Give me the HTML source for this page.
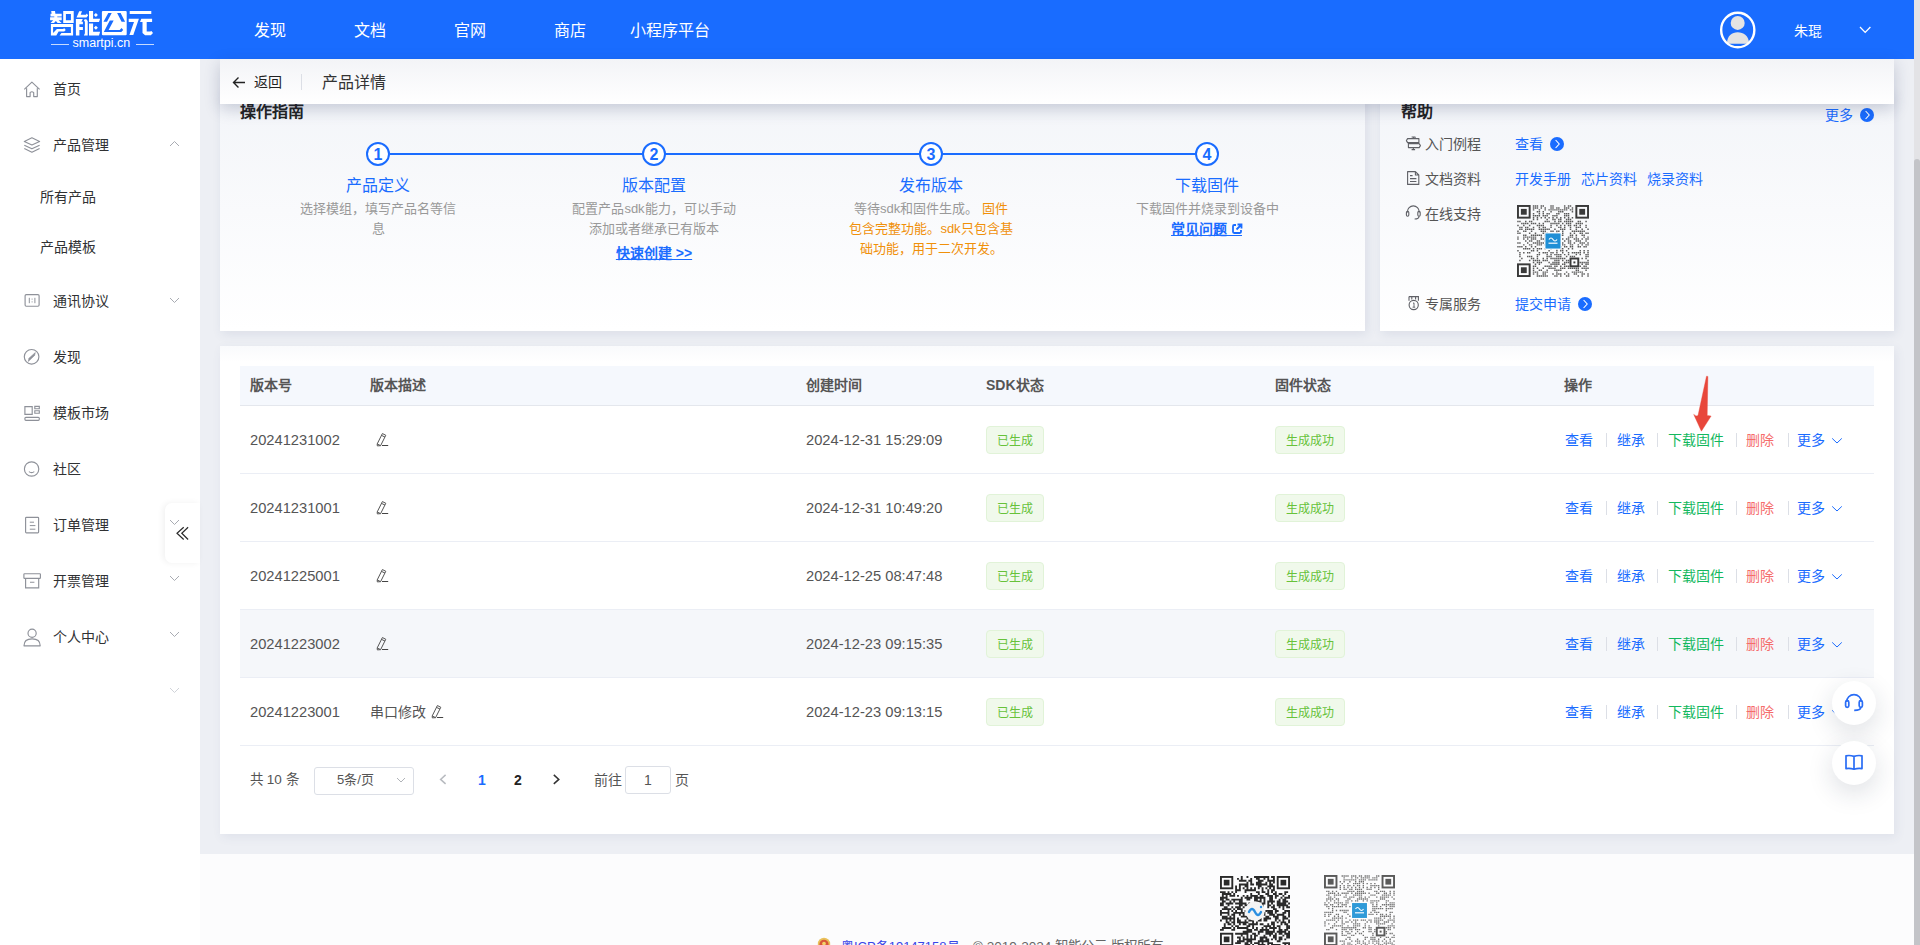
<!DOCTYPE html><html lang="zh-CN"><head><meta charset="utf-8"><style>
*{box-sizing:border-box}
html,body{margin:0;padding:0}
body{width:1920px;height:945px;overflow:hidden;position:relative;background:#edeff4;font-family:"Liberation Sans",sans-serif;color:#333}
.abs{position:absolute;display:block}
.t{position:absolute;white-space:nowrap}
#hdr{position:absolute;left:0;top:0;width:1914px;height:59px;background:#196cff}
.nav{position:absolute;top:1px;height:59px;line-height:59px;width:100px;text-align:center;color:#fff;font-size:16px}
#side{position:absolute;left:0;top:59px;width:200px;height:886px;background:#fff}
.mi{position:absolute;left:53px;font-size:14px;line-height:20px;color:#303133}
.si{position:absolute;left:40px;font-size:14px;line-height:20px;color:#303133}
.card{position:absolute;background:linear-gradient(180deg,#f3f5f9 0%,#ffffff 100%);box-shadow:2px 3px 10px rgba(60,80,130,.1)}
.bar{position:absolute;left:220px;top:59px;width:1674px;height:45px;background:linear-gradient(180deg,#f3f4f7,#ffffff);box-shadow:0 5px 16px rgba(30,45,90,.22);z-index:5}
.step{position:absolute;width:276px;text-align:center}
.stt{font-size:16px;line-height:22px;color:#1a6cff}
.std{font-size:13px;line-height:20px;color:#999}
.circ{position:absolute;width:24px;height:24px;border:2px solid #1a6cff;border-radius:50%;background:#fff;color:#1a6cff;font-weight:bold;font-size:16px;line-height:21px;text-align:center}
.org{color:#f0900a}
.lnk{color:#1a6cff;font-weight:bold;text-decoration:underline;font-size:14px}
.hl{position:absolute;font-size:14px;line-height:20px;color:#555}
.hv{position:absolute;font-size:14px;line-height:20px;color:#1a6cff}
.arr{display:inline-block;width:13px;height:13px;border-radius:50%;background:#1a6cff;vertical-align:-1px}
.th{position:absolute;top:366px;font-size:14px;font-weight:bold;color:#555;line-height:39px}
.td{position:absolute;font-size:14px;color:#555;line-height:20px}
.dg{font-size:14.7px}
.tag{position:absolute;height:28px;border:1px solid #e1f3d8;background:#f0f9eb;color:#67c23a;border-radius:4px;font-size:12px;line-height:28px;text-align:center}
.op{position:absolute;font-size:14px;line-height:20px}
.dv{position:absolute;width:1px;height:14px;background:#dcdfe6}
</style></head><body><div id="hdr"><svg class="abs" style="left:0;top:0" width="160" height="59" viewBox="0 0 160 59"><g fill="#fff">
<path fill-rule="evenodd" d="M63.2 11 H73.7 V22.9 H63.2 Z M65.9 13.9 V20.2 H70.9 V13.9 Z"/>
<path d="M51.2 10.9 H55 L55.4 13.7 H61.7 V16.4 H57.3 V17.2 H61.7 V20.2 H58.6 L61.7 22.9 H57.6 L55.9 21 L54 22.9 H50.5 L53.2 20.2 H50.1 V17.2 H54.3 V16.4 H50.5 V13.7 H51.6 Z"/>
<path fill-rule="evenodd" d="M50.9 24 H73.1 V35.6 H59.6 L61.4 33.1 H70.9 V27 H53.1 V33.1 L56.9 29 H63.4 L64 28 L65.8 29.9 L64.2 31.5 H58.6 L56.3 35.6 H50.9 Z"/>
<path d="M79.2 11.2 H82 L80.7 14.8 H85.9 L86.9 13.6 L88.1 15.6 L86.5 17.5 H76.5 Z"/>
<path d="M75.9 19.1 H82.8 L81.4 21.7 H79.4 V35.6 H75.9 Z M79.4 21.7 H82.9 V24.2 H79.4 Z M79.4 27 H82.9 V29.9 H79.4 Z M84.6 19.2 H86.3 L87.7 21 V35.6 H83.9 L84.9 33.3 V21.6 L83.9 20.9 Z"/>
<path d="M89 10.9 H93.1 V18.8 H100.1 L99 22 H89 Z M89 23.6 H93.1 V31.8 H100.1 L99 35.6 H89 Z"/>
<path d="M95.9 13 L97.9 15 L95.9 17 L93.9 15 Z M95.9 25.8 L97.9 27.8 L95.9 29.8 L93.9 27.8 Z"/>
<path fill-rule="evenodd" d="M103 10.9 H125.6 Q126.7 10.9 126.7 12 V34.2 Q126.7 35.3 125.6 35.3 H103 Q101.9 35.3 101.9 34.2 V12 Q101.9 10.9 103 10.9 Z M108.3 13.1 L111.7 13.1 L107 21.65 L103.5 21.65 Z M117.1 13.1 L120.6 13.1 L125.1 21.65 L121.6 21.65 Z M109.8 20.4 L113.65 20.4 L108.6 29.9 L119.7 29.9 L121.6 28 L123.2 29.9 L121.3 32.1 L103.8 32.1 Z"/>
<path d="M129.7 11 H151.3 V13.9 H129.7 Z M128.7 18.8 H138.9 L133.3 35 H129.4 L134 22 H128.7 Z M141.3 18.8 H152.1 V22 H146.7 V31.5 H150.2 L151.4 30.9 L153 33.1 L150.8 35.3 H145.1 L142.5 33.1 V22 H140 Z"/>
</g></svg><div class="t" style="left:72.6px;top:35px;font-size:12.5px;color:#fff;line-height:16px">smartpi.cn</div><div class="abs" style="left:51px;top:44px;width:18px;height:1px;background:rgba(255,255,255,.75)"></div><div class="abs" style="left:136px;top:44px;width:18px;height:1px;background:rgba(255,255,255,.75)"></div><div class="nav" style="left:220px">发现</div><div class="nav" style="left:320px">文档</div><div class="nav" style="left:420px">官网</div><div class="nav" style="left:520px">商店</div><div class="nav" style="left:620px">小程序平台</div><svg class="abs" style="left:1719px;top:11px" width="38" height="38" viewBox="0 0 38 38"><circle cx="18.7" cy="11.9" r="7" fill="#e3e3e3"/><path d="M8 32.8 C8 24.5 13 21.3 18.7 21.3 C24.4 21.3 30 24.5 30 32.8 Z" fill="#e3e3e3"/><ellipse cx="18.75" cy="19" rx="16.6" ry="17.3" fill="none" stroke="#fff" stroke-width="2.4"/></svg><div class="t" style="left:1794px;top:20.5px;font-size:14px;line-height:20px;color:#fff">朱琨</div><svg class="abs" style="left:1858px;top:24px" width="14" height="10" viewBox="0 0 14 10"><path d="M2 3 L7.2 8.4 L12.4 3" fill="none" stroke="#fff" stroke-width="1.3"/></svg></div><svg class="abs" style="left:0;top:0;z-index:2" width="200" height="700" viewBox="0 0 200 700">
<path d="M24.3 89.4 L31.9 82.2 L39.6 89.4 M26.6 88.2 V96.6 H30.1 V92.6 Q31.9 90.9 33.7 92.6 V96.6 H37.3 V88.2" fill="none" stroke="#8e9199" stroke-width="1.15" stroke-linejoin="round"/>
<path d="M24.3 141.4 L31.9 137.8 L39.6 141.4 L31.9 145 Z M24.3 145.2 L31.9 148.8 L39.6 145.2 M24.3 148.6 L31.9 152.2 L39.6 148.6" fill="none" stroke="#8e9199" stroke-width="1.15" stroke-linejoin="round"/>
<rect x="25.1" y="294.6" width="14" height="11.6" rx="1.2" fill="none" stroke="#8e9199" stroke-width="1.15"/>
<path d="M29.3 297.8 V303.2 M34.9 297.8 V303.2 M32.1 298.6 V299.6 M32.1 301.4 V302.4" stroke="#8e9199" stroke-width="1"/>
<circle cx="31.6" cy="356.8" r="7.3" fill="none" stroke="#8e9199" stroke-width="1.15"/>
<path d="M35.3 352.6 L34.6 355.4 L28.3 361.4 L29 358.2 Z" fill="#8e9199" stroke="#8e9199" stroke-width="0.6" stroke-linejoin="round"/>
<path d="M24.9 406.6 H32.2 V414.4 H24.9 Z M34.8 406.4 H39.3 V408.7 H34.8 Z M34.8 410.7 H39.3 V413.2 H34.8 Z" fill="none" stroke="#8e9199" stroke-width="1.15"/>
<rect x="24.9" y="417.3" width="14.4" height="3" rx="1" fill="none" stroke="#8e9199" stroke-width="1.15"/>
<circle cx="31.6" cy="469" r="7.2" fill="none" stroke="#8e9199" stroke-width="1.15"/>
<path d="M28.9 471.6 Q31.6 473.6 34.3 471.6" fill="none" stroke="#8e9199" stroke-width="1.15"/>
<rect x="25.6" y="517.3" width="13" height="15.5" rx="0.8" fill="none" stroke="#8e9199" stroke-width="1.15"/>
<path d="M29.8 522.2 H34 M29.8 525.6 H35.4 M29.8 529.2 H35.4" stroke="#8e9199" stroke-width="1"/>
<rect x="23.9" y="573.7" width="16.5" height="4.6" rx="0.6" fill="none" stroke="#8e9199" stroke-width="1.15"/>
<path d="M25.6 578.3 V587.8 H38.7 V578.3 M30 582.2 H34.4" fill="none" stroke="#8e9199" stroke-width="1.15"/>
<circle cx="32.1" cy="633.2" r="4.1" fill="none" stroke="#8e9199" stroke-width="1.15"/>
<path d="M24 645.8 C24 640.5 28 638.9 32.1 638.9 C36.2 638.9 40.2 640.5 40.2 645.8 Z" fill="none" stroke="#8e9199" stroke-width="1.15" stroke-linejoin="round"/>
</svg><div id="side"></div><div class="mi" style="top:79px">首页</div><div class="mi" style="top:135px">产品管理</div><svg class="abs" style="left:169px;top:140px" width="11" height="7" viewBox="0 0 11 7"><path d="M1 6 L5.5 1.5 L10 6" fill="none" stroke="#a8abb2" stroke-width="1"/></svg><div class="si" style="top:187px">所有产品</div><div class="si" style="top:237px">产品模板</div><div class="mi" style="top:291px">通讯协议</div><svg class="abs" style="left:169px;top:297px;z-index:4" width="11" height="7" viewBox="0 0 11 7"><path d="M1 1 L5.5 5.5 L10 1" fill="none" stroke="#a8abb2" stroke-width="1"/></svg><div class="mi" style="top:347px">发现</div><div class="mi" style="top:403px">模板市场</div><div class="mi" style="top:459px">社区</div><div class="mi" style="top:515px">订单管理</div><svg class="abs" style="left:169px;top:519px;z-index:4" width="11" height="7" viewBox="0 0 11 7"><path d="M1 1 L5.5 5.5 L10 1" fill="none" stroke="#a8abb2" stroke-width="1"/></svg><div class="mi" style="top:571px">开票管理</div><svg class="abs" style="left:169px;top:575px;z-index:4" width="11" height="7" viewBox="0 0 11 7"><path d="M1 1 L5.5 5.5 L10 1" fill="none" stroke="#a8abb2" stroke-width="1"/></svg><div class="mi" style="top:627px">个人中心</div><svg class="abs" style="left:169px;top:631px;z-index:4" width="11" height="7" viewBox="0 0 11 7"><path d="M1 1 L5.5 5.5 L10 1" fill="none" stroke="#a8abb2" stroke-width="1"/></svg><svg class="abs" style="left:169px;top:687px" width="11" height="7" viewBox="0 0 11 7"><path d="M1 1 L5.5 5.5 L10 1" fill="none" stroke="#d0d3d9" stroke-width="1"/></svg><div class="abs" style="left:165px;top:503px;width:35px;height:60px;background:#fff;border-radius:7px 0 0 7px;box-shadow:-2px 0 6px rgba(0,0,0,.06);z-index:3"></div><svg class="abs" style="left:176px;top:526px;z-index:4" width="14" height="15" viewBox="0 0 14 15"><path d="M7.7 1.3 L1 7.2 L7.7 13.5 M12.1 1.3 L5.8 7.2 L12.1 13.5" fill="none" stroke="#2a2a2a" stroke-width="1.2"/></svg><div class="bar"><svg class="abs" style="left:12px;top:17px" width="14" height="13" viewBox="0 0 14 13"><path d="M13 6.5 H1.5 M6.5 1.5 L1.5 6.5 L6.5 11.5" fill="none" stroke="#222" stroke-width="1.4"/></svg><div class="t" style="left:34px;top:13px;font-size:14px;line-height:20px;color:#222">返回</div><div class="abs" style="left:81px;top:15px;width:1px;height:16px;background:#dcdfe6"></div><div class="t" style="left:102px;top:13px;font-size:16px;line-height:22px;color:#333">产品详情</div></div><div class="card" style="left:220px;top:91px;width:1145px;height:240px"></div><div class="t" style="left:240px;top:101px;font-size:16px;line-height:22px;font-weight:bold;color:#222">操作指南</div><div class="abs" style="left:390px;top:153px;width:806px;height:2px;background:#1a6cff"></div><div class="circ" style="left:366px;top:142px">1</div><div class="step" style="left:240px;top:175px"><div class="stt">产品定义</div><div class="std" style="margin-top:2px">选择模组，填写产品名等信<br>息</div></div><div class="circ" style="left:642px;top:142px">2</div><div class="step" style="left:516px;top:175px"><div class="stt">版本配置</div><div class="std" style="margin-top:2px">配置产品sdk能力，可以手动<br>添加或者继承已有版本</div><div style="margin-top:4px;line-height:20px"><span class="lnk">快速创建 &gt;&gt;</span></div></div><div class="circ" style="left:919px;top:142px">3</div><div class="step" style="left:793px;top:175px"><div class="stt">发布版本</div><div class="std" style="margin-top:2px">等待sdk和固件生成。 <span class="org">固件<br>包含完整功能。sdk只包含基<br>础功能，用于二次开发。</span></div></div><div class="circ" style="left:1195px;top:142px">4</div><div class="step" style="left:1069px;top:175px"><div class="stt">下载固件</div><div class="std" style="margin-top:2px">下载固件并烧录到设备中</div><div style="margin-top:0px;line-height:20px"><span class="lnk">常见问题 <svg width="12" height="12" viewBox="0 0 12 12" style="vertical-align:-1px"><path d="M5 2H3.2Q2 2 2 3.2v5.6Q2 10 3.2 10h5.6Q10 10 10 8.8V7" fill="none" stroke="#1a6cff" stroke-width="1.8"/><path d="M6.5 1.5h4v4M10.5 1.5 L5.5 6.5" fill="none" stroke="#1a6cff" stroke-width="1.8"/></svg></span></div></div><div class="abs" style="left:1226px;top:235px;width:16px;height:1px;background:#1a6cff"></div><div class="card" style="left:1380px;top:91px;width:514px;height:240px"></div><div class="t" style="left:1401px;top:101px;font-size:16px;line-height:22px;font-weight:bold;color:#222">帮助</div><div class="hv" style="left:1825px;top:105px">更多 <svg width="14" height="14" viewBox="0 0 14 14" style="vertical-align:-2px;margin-left:3px"><circle cx="7" cy="7" r="7" fill="#1a6cff"/><path d="M5.6 3 L9.2 7 L5.6 11" fill="none" stroke="#fff" stroke-width="1.1"/></svg></div><svg class="abs" style="left:0;top:0;z-index:2" width="1920" height="340" viewBox="0 0 1920 340">
<path d="M1411.6 137 H1415.1 V138.6 M1413.35 137 V138.6 M1407.6 138.6 H1418.9 V142.6 H1407.6 L1406.4 140.6 Z M1408.4 143.6 H1419.2 L1420.4 145.6 L1419.2 147.6 H1408.4 Z M1413.35 147.6 V149.6 M1411.6 149.6 H1415.1" fill="none" stroke="#5f6066" stroke-width="1.1" stroke-linejoin="round"/>
<path d="M1407.6 171.6 H1415.4 L1418.8 175 V184.4 H1407.6 Z M1415.4 171.6 V175 H1418.8" fill="none" stroke="#5f6066" stroke-width="1.1" stroke-linejoin="round"/>
<path d="M1410 175.6 H1412.6 M1410 178.6 H1416.4 M1410 181.5 H1416.4" stroke="#5f6066" stroke-width="1.1"/>
<path d="M1407.4 212.6 V211.8 A5.9 5.9 0 0 1 1419.2 211.8 V212.6" fill="none" stroke="#5f6066" stroke-width="1.1"/>
<rect x="1406.4" y="211.4" width="2.4" height="4.8" rx="1.2" fill="none" stroke="#5f6066" stroke-width="1.1"/>
<rect x="1417.8" y="211.4" width="2.4" height="4.8" rx="1.2" fill="none" stroke="#5f6066" stroke-width="1.1"/>
<path d="M1419 216.2 Q1419 219 1414.6 219" fill="none" stroke="#5f6066" stroke-width="1.1"/>
<path d="M1409 296.6 H1418.4 V300.8 M1409 296.6 V300.8 M1411.8 296.6 V299.6 M1415.6 296.6 V299.6" fill="none" stroke="#5f6066" stroke-width="1.1"/>
<circle cx="1413.7" cy="305" r="4.6" fill="none" stroke="#5f6066" stroke-width="1.1"/>
<path d="M1413 303.4 L1414 302.8 V307.2 M1412.6 307.2 H1415.2" fill="none" stroke="#5f6066" stroke-width="0.9"/>
</svg><div class="hl" style="left:1425px;top:134px">入门例程</div><div class="hl" style="left:1425px;top:169px">文档资料</div><div class="hl" style="left:1425px;top:204px">在线支持</div><div class="hl" style="left:1425px;top:294px">专属服务</div><div class="hv" style="left:1515px;top:134px">查看 <svg width="14" height="14" viewBox="0 0 14 14" style="vertical-align:-2px;margin-left:3px"><circle cx="7" cy="7" r="7" fill="#1a6cff"/><path d="M5.6 3 L9.2 7 L5.6 11" fill="none" stroke="#fff" stroke-width="1.1"/></svg></div><div class="hv" style="left:1515px;top:169px">开发手册</div><div class="hv" style="left:1581px;top:169px">芯片资料</div><div class="hv" style="left:1647px;top:169px">烧录资料</div><svg class="abs" style="left:1517px;top:205px" width="72" height="72" viewBox="0 0 72 72"><rect x="0.97" y="0.97" width="11.68" height="11.68" fill="none" stroke="#3a3a3a" stroke-width="1.95"/><rect x="3.89" y="3.89" width="5.84" height="5.84" fill="#3a3a3a"/><rect x="59.35" y="0.97" width="11.68" height="11.68" fill="none" stroke="#3a3a3a" stroke-width="1.95"/><rect x="62.27" y="3.89" width="5.84" height="5.84" fill="#3a3a3a"/><rect x="0.97" y="59.35" width="11.68" height="11.68" fill="none" stroke="#3a3a3a" stroke-width="1.95"/><rect x="3.89" y="62.27" width="5.84" height="5.84" fill="#3a3a3a"/><rect x="53.51" y="53.51" width="7.78" height="7.78" fill="none" stroke="#3a3a3a" stroke-width="1.95"/><rect x="56.43" y="56.43" width="1.95" height="1.95" fill="#3a3a3a"/><path d="M0.24 15.81h1.46v1.46h-1.46zM0.24 19.70h1.46v1.46h-1.46zM0.24 25.54h1.46v1.46h-1.46zM0.24 27.49h1.46v1.46h-1.46zM0.24 31.38h1.46v1.46h-1.46zM0.24 33.32h1.46v1.46h-1.46zM0.24 37.22h1.46v1.46h-1.46zM0.24 41.11h1.46v1.46h-1.46zM0.24 45.00h1.46v1.46h-1.46zM2.19 15.81h1.46v1.46h-1.46zM2.19 21.65h1.46v1.46h-1.46zM2.19 23.59h1.46v1.46h-1.46zM2.19 27.49h1.46v1.46h-1.46zM2.19 37.22h1.46v1.46h-1.46zM2.19 41.11h1.46v1.46h-1.46zM2.19 46.95h1.46v1.46h-1.46zM2.19 48.89h1.46v1.46h-1.46zM2.19 50.84h1.46v1.46h-1.46zM2.19 54.73h1.46v1.46h-1.46zM4.14 17.76h1.46v1.46h-1.46zM4.14 21.65h1.46v1.46h-1.46zM4.14 23.59h1.46v1.46h-1.46zM4.14 41.11h1.46v1.46h-1.46zM4.14 52.78h1.46v1.46h-1.46zM6.08 17.76h1.46v1.46h-1.46zM6.08 19.70h1.46v1.46h-1.46zM6.08 25.54h1.46v1.46h-1.46zM6.08 29.43h1.46v1.46h-1.46zM6.08 31.38h1.46v1.46h-1.46zM6.08 33.32h1.46v1.46h-1.46zM6.08 39.16h1.46v1.46h-1.46zM6.08 43.05h1.46v1.46h-1.46zM6.08 46.95h1.46v1.46h-1.46zM8.03 15.81h1.46v1.46h-1.46zM8.03 17.76h1.46v1.46h-1.46zM8.03 21.65h1.46v1.46h-1.46zM8.03 23.59h1.46v1.46h-1.46zM8.03 25.54h1.46v1.46h-1.46zM8.03 29.43h1.46v1.46h-1.46zM8.03 31.38h1.46v1.46h-1.46zM8.03 35.27h1.46v1.46h-1.46zM8.03 41.11h1.46v1.46h-1.46zM8.03 43.05h1.46v1.46h-1.46zM9.97 17.76h1.46v1.46h-1.46zM9.97 21.65h1.46v1.46h-1.46zM9.97 23.59h1.46v1.46h-1.46zM9.97 31.38h1.46v1.46h-1.46zM9.97 33.32h1.46v1.46h-1.46zM9.97 37.22h1.46v1.46h-1.46zM9.97 43.05h1.46v1.46h-1.46zM9.97 46.95h1.46v1.46h-1.46zM9.97 50.84h1.46v1.46h-1.46zM11.92 15.81h1.46v1.46h-1.46zM11.92 19.70h1.46v1.46h-1.46zM11.92 23.59h1.46v1.46h-1.46zM11.92 27.49h1.46v1.46h-1.46zM11.92 31.38h1.46v1.46h-1.46zM11.92 35.27h1.46v1.46h-1.46zM11.92 39.16h1.46v1.46h-1.46zM11.92 43.05h1.46v1.46h-1.46zM11.92 46.95h1.46v1.46h-1.46zM11.92 50.84h1.46v1.46h-1.46zM11.92 54.73h1.46v1.46h-1.46zM13.86 15.81h1.46v1.46h-1.46zM13.86 17.76h1.46v1.46h-1.46zM13.86 23.59h1.46v1.46h-1.46zM13.86 25.54h1.46v1.46h-1.46zM13.86 29.43h1.46v1.46h-1.46zM13.86 31.38h1.46v1.46h-1.46zM13.86 33.32h1.46v1.46h-1.46zM13.86 35.27h1.46v1.46h-1.46zM13.86 39.16h1.46v1.46h-1.46zM13.86 41.11h1.46v1.46h-1.46zM13.86 45.00h1.46v1.46h-1.46zM13.86 50.84h1.46v1.46h-1.46zM13.86 52.78h1.46v1.46h-1.46zM15.81 0.24h1.46v1.46h-1.46zM15.81 2.19h1.46v1.46h-1.46zM15.81 4.14h1.46v1.46h-1.46zM15.81 8.03h1.46v1.46h-1.46zM15.81 9.97h1.46v1.46h-1.46zM15.81 11.92h1.46v1.46h-1.46zM15.81 13.86h1.46v1.46h-1.46zM15.81 17.76h1.46v1.46h-1.46zM15.81 21.65h1.46v1.46h-1.46zM15.81 23.59h1.46v1.46h-1.46zM15.81 29.43h1.46v1.46h-1.46zM15.81 31.38h1.46v1.46h-1.46zM15.81 33.32h1.46v1.46h-1.46zM15.81 37.22h1.46v1.46h-1.46zM15.81 43.05h1.46v1.46h-1.46zM15.81 45.00h1.46v1.46h-1.46zM15.81 52.78h1.46v1.46h-1.46zM15.81 54.73h1.46v1.46h-1.46zM15.81 56.68h1.46v1.46h-1.46zM15.81 60.57h1.46v1.46h-1.46zM15.81 62.51h1.46v1.46h-1.46zM15.81 64.46h1.46v1.46h-1.46zM15.81 66.41h1.46v1.46h-1.46zM15.81 68.35h1.46v1.46h-1.46zM17.76 0.24h1.46v1.46h-1.46zM17.76 2.19h1.46v1.46h-1.46zM17.76 9.97h1.46v1.46h-1.46zM17.76 17.76h1.46v1.46h-1.46zM17.76 27.49h1.46v1.46h-1.46zM17.76 29.43h1.46v1.46h-1.46zM17.76 31.38h1.46v1.46h-1.46zM17.76 33.32h1.46v1.46h-1.46zM17.76 37.22h1.46v1.46h-1.46zM17.76 41.11h1.46v1.46h-1.46zM17.76 54.73h1.46v1.46h-1.46zM17.76 58.62h1.46v1.46h-1.46zM17.76 60.57h1.46v1.46h-1.46zM17.76 66.41h1.46v1.46h-1.46zM19.70 0.24h1.46v1.46h-1.46zM19.70 2.19h1.46v1.46h-1.46zM19.70 6.08h1.46v1.46h-1.46zM19.70 9.97h1.46v1.46h-1.46zM19.70 11.92h1.46v1.46h-1.46zM19.70 13.86h1.46v1.46h-1.46zM19.70 19.70h1.46v1.46h-1.46zM19.70 29.43h1.46v1.46h-1.46zM19.70 35.27h1.46v1.46h-1.46zM19.70 37.22h1.46v1.46h-1.46zM19.70 39.16h1.46v1.46h-1.46zM19.70 43.05h1.46v1.46h-1.46zM19.70 45.00h1.46v1.46h-1.46zM19.70 48.89h1.46v1.46h-1.46zM19.70 50.84h1.46v1.46h-1.46zM19.70 52.78h1.46v1.46h-1.46zM19.70 54.73h1.46v1.46h-1.46zM19.70 56.68h1.46v1.46h-1.46zM19.70 62.51h1.46v1.46h-1.46zM19.70 66.41h1.46v1.46h-1.46zM19.70 68.35h1.46v1.46h-1.46zM19.70 70.30h1.46v1.46h-1.46zM21.65 4.14h1.46v1.46h-1.46zM21.65 6.08h1.46v1.46h-1.46zM21.65 8.03h1.46v1.46h-1.46zM21.65 9.97h1.46v1.46h-1.46zM21.65 17.76h1.46v1.46h-1.46zM21.65 19.70h1.46v1.46h-1.46zM21.65 21.65h1.46v1.46h-1.46zM21.65 23.59h1.46v1.46h-1.46zM21.65 29.43h1.46v1.46h-1.46zM21.65 35.27h1.46v1.46h-1.46zM21.65 37.22h1.46v1.46h-1.46zM21.65 39.16h1.46v1.46h-1.46zM21.65 43.05h1.46v1.46h-1.46zM21.65 46.95h1.46v1.46h-1.46zM21.65 48.89h1.46v1.46h-1.46zM21.65 54.73h1.46v1.46h-1.46zM21.65 56.68h1.46v1.46h-1.46zM21.65 58.62h1.46v1.46h-1.46zM21.65 64.46h1.46v1.46h-1.46zM21.65 70.30h1.46v1.46h-1.46zM23.59 0.24h1.46v1.46h-1.46zM23.59 2.19h1.46v1.46h-1.46zM23.59 11.92h1.46v1.46h-1.46zM23.59 19.70h1.46v1.46h-1.46zM23.59 23.59h1.46v1.46h-1.46zM23.59 25.54h1.46v1.46h-1.46zM23.59 29.43h1.46v1.46h-1.46zM23.59 31.38h1.46v1.46h-1.46zM23.59 33.32h1.46v1.46h-1.46zM23.59 37.22h1.46v1.46h-1.46zM23.59 39.16h1.46v1.46h-1.46zM23.59 43.05h1.46v1.46h-1.46zM23.59 56.68h1.46v1.46h-1.46zM23.59 64.46h1.46v1.46h-1.46zM23.59 70.30h1.46v1.46h-1.46zM25.54 0.24h1.46v1.46h-1.46zM25.54 6.08h1.46v1.46h-1.46zM25.54 8.03h1.46v1.46h-1.46zM25.54 9.97h1.46v1.46h-1.46zM25.54 17.76h1.46v1.46h-1.46zM25.54 19.70h1.46v1.46h-1.46zM25.54 21.65h1.46v1.46h-1.46zM25.54 23.59h1.46v1.46h-1.46zM25.54 25.54h1.46v1.46h-1.46zM25.54 27.49h1.46v1.46h-1.46zM25.54 33.32h1.46v1.46h-1.46zM25.54 37.22h1.46v1.46h-1.46zM25.54 46.95h1.46v1.46h-1.46zM25.54 52.78h1.46v1.46h-1.46zM25.54 54.73h1.46v1.46h-1.46zM25.54 62.51h1.46v1.46h-1.46zM25.54 66.41h1.46v1.46h-1.46zM25.54 68.35h1.46v1.46h-1.46zM25.54 70.30h1.46v1.46h-1.46zM27.49 2.19h1.46v1.46h-1.46zM27.49 4.14h1.46v1.46h-1.46zM27.49 9.97h1.46v1.46h-1.46zM27.49 11.92h1.46v1.46h-1.46zM27.49 15.81h1.46v1.46h-1.46zM27.49 21.65h1.46v1.46h-1.46zM27.49 23.59h1.46v1.46h-1.46zM27.49 25.54h1.46v1.46h-1.46zM27.49 27.49h1.46v1.46h-1.46zM27.49 29.43h1.46v1.46h-1.46zM27.49 31.38h1.46v1.46h-1.46zM27.49 33.32h1.46v1.46h-1.46zM27.49 35.27h1.46v1.46h-1.46zM27.49 39.16h1.46v1.46h-1.46zM27.49 43.05h1.46v1.46h-1.46zM27.49 46.95h1.46v1.46h-1.46zM27.49 54.73h1.46v1.46h-1.46zM27.49 60.57h1.46v1.46h-1.46zM27.49 66.41h1.46v1.46h-1.46zM27.49 68.35h1.46v1.46h-1.46zM27.49 70.30h1.46v1.46h-1.46zM29.43 8.03h1.46v1.46h-1.46zM29.43 9.97h1.46v1.46h-1.46zM29.43 13.86h1.46v1.46h-1.46zM29.43 15.81h1.46v1.46h-1.46zM29.43 23.59h1.46v1.46h-1.46zM29.43 27.49h1.46v1.46h-1.46zM29.43 29.43h1.46v1.46h-1.46zM29.43 33.32h1.46v1.46h-1.46zM29.43 35.27h1.46v1.46h-1.46zM29.43 39.16h1.46v1.46h-1.46zM29.43 41.11h1.46v1.46h-1.46zM29.43 46.95h1.46v1.46h-1.46zM29.43 48.89h1.46v1.46h-1.46zM29.43 50.84h1.46v1.46h-1.46zM29.43 52.78h1.46v1.46h-1.46zM29.43 54.73h1.46v1.46h-1.46zM29.43 60.57h1.46v1.46h-1.46zM29.43 64.46h1.46v1.46h-1.46zM29.43 66.41h1.46v1.46h-1.46zM29.43 70.30h1.46v1.46h-1.46zM31.38 4.14h1.46v1.46h-1.46zM31.38 8.03h1.46v1.46h-1.46zM31.38 11.92h1.46v1.46h-1.46zM31.38 15.81h1.46v1.46h-1.46zM31.38 23.59h1.46v1.46h-1.46zM31.38 33.32h1.46v1.46h-1.46zM31.38 35.27h1.46v1.46h-1.46zM31.38 37.22h1.46v1.46h-1.46zM31.38 45.00h1.46v1.46h-1.46zM31.38 50.84h1.46v1.46h-1.46zM31.38 56.68h1.46v1.46h-1.46zM31.38 60.57h1.46v1.46h-1.46zM31.38 62.51h1.46v1.46h-1.46zM33.32 0.24h1.46v1.46h-1.46zM33.32 2.19h1.46v1.46h-1.46zM33.32 4.14h1.46v1.46h-1.46zM33.32 6.08h1.46v1.46h-1.46zM33.32 17.76h1.46v1.46h-1.46zM33.32 19.70h1.46v1.46h-1.46zM33.32 21.65h1.46v1.46h-1.46zM33.32 25.54h1.46v1.46h-1.46zM33.32 29.43h1.46v1.46h-1.46zM33.32 33.32h1.46v1.46h-1.46zM33.32 35.27h1.46v1.46h-1.46zM33.32 37.22h1.46v1.46h-1.46zM33.32 43.05h1.46v1.46h-1.46zM33.32 46.95h1.46v1.46h-1.46zM33.32 48.89h1.46v1.46h-1.46zM33.32 50.84h1.46v1.46h-1.46zM33.32 52.78h1.46v1.46h-1.46zM33.32 58.62h1.46v1.46h-1.46zM33.32 60.57h1.46v1.46h-1.46zM33.32 62.51h1.46v1.46h-1.46zM35.27 0.24h1.46v1.46h-1.46zM35.27 2.19h1.46v1.46h-1.46zM35.27 4.14h1.46v1.46h-1.46zM35.27 9.97h1.46v1.46h-1.46zM35.27 11.92h1.46v1.46h-1.46zM35.27 13.86h1.46v1.46h-1.46zM35.27 17.76h1.46v1.46h-1.46zM35.27 25.54h1.46v1.46h-1.46zM35.27 37.22h1.46v1.46h-1.46zM35.27 41.11h1.46v1.46h-1.46zM35.27 46.95h1.46v1.46h-1.46zM35.27 52.78h1.46v1.46h-1.46zM35.27 56.68h1.46v1.46h-1.46zM35.27 58.62h1.46v1.46h-1.46zM35.27 62.51h1.46v1.46h-1.46zM35.27 68.35h1.46v1.46h-1.46zM37.22 4.14h1.46v1.46h-1.46zM37.22 9.97h1.46v1.46h-1.46zM37.22 13.86h1.46v1.46h-1.46zM37.22 15.81h1.46v1.46h-1.46zM37.22 17.76h1.46v1.46h-1.46zM37.22 23.59h1.46v1.46h-1.46zM37.22 29.43h1.46v1.46h-1.46zM37.22 41.11h1.46v1.46h-1.46zM37.22 48.89h1.46v1.46h-1.46zM37.22 52.78h1.46v1.46h-1.46zM37.22 54.73h1.46v1.46h-1.46zM37.22 56.68h1.46v1.46h-1.46zM37.22 58.62h1.46v1.46h-1.46zM37.22 60.57h1.46v1.46h-1.46zM37.22 62.51h1.46v1.46h-1.46zM37.22 64.46h1.46v1.46h-1.46zM37.22 70.30h1.46v1.46h-1.46zM39.16 2.19h1.46v1.46h-1.46zM39.16 4.14h1.46v1.46h-1.46zM39.16 8.03h1.46v1.46h-1.46zM39.16 9.97h1.46v1.46h-1.46zM39.16 11.92h1.46v1.46h-1.46zM39.16 17.76h1.46v1.46h-1.46zM39.16 19.70h1.46v1.46h-1.46zM39.16 25.54h1.46v1.46h-1.46zM39.16 27.49h1.46v1.46h-1.46zM39.16 29.43h1.46v1.46h-1.46zM39.16 33.32h1.46v1.46h-1.46zM39.16 35.27h1.46v1.46h-1.46zM39.16 37.22h1.46v1.46h-1.46zM39.16 39.16h1.46v1.46h-1.46zM39.16 41.11h1.46v1.46h-1.46zM39.16 43.05h1.46v1.46h-1.46zM39.16 45.00h1.46v1.46h-1.46zM39.16 46.95h1.46v1.46h-1.46zM39.16 48.89h1.46v1.46h-1.46zM39.16 50.84h1.46v1.46h-1.46zM39.16 52.78h1.46v1.46h-1.46zM39.16 54.73h1.46v1.46h-1.46zM39.16 56.68h1.46v1.46h-1.46zM39.16 58.62h1.46v1.46h-1.46zM39.16 60.57h1.46v1.46h-1.46zM39.16 64.46h1.46v1.46h-1.46zM39.16 66.41h1.46v1.46h-1.46zM39.16 68.35h1.46v1.46h-1.46zM39.16 70.30h1.46v1.46h-1.46zM41.11 2.19h1.46v1.46h-1.46zM41.11 4.14h1.46v1.46h-1.46zM41.11 6.08h1.46v1.46h-1.46zM41.11 8.03h1.46v1.46h-1.46zM41.11 13.86h1.46v1.46h-1.46zM41.11 15.81h1.46v1.46h-1.46zM41.11 17.76h1.46v1.46h-1.46zM41.11 21.65h1.46v1.46h-1.46zM41.11 25.54h1.46v1.46h-1.46zM41.11 29.43h1.46v1.46h-1.46zM41.11 31.38h1.46v1.46h-1.46zM41.11 33.32h1.46v1.46h-1.46zM41.11 39.16h1.46v1.46h-1.46zM41.11 41.11h1.46v1.46h-1.46zM41.11 48.89h1.46v1.46h-1.46zM41.11 50.84h1.46v1.46h-1.46zM41.11 52.78h1.46v1.46h-1.46zM41.11 54.73h1.46v1.46h-1.46zM41.11 56.68h1.46v1.46h-1.46zM41.11 58.62h1.46v1.46h-1.46zM41.11 64.46h1.46v1.46h-1.46zM41.11 68.35h1.46v1.46h-1.46zM43.05 4.14h1.46v1.46h-1.46zM43.05 6.08h1.46v1.46h-1.46zM43.05 11.92h1.46v1.46h-1.46zM43.05 13.86h1.46v1.46h-1.46zM43.05 15.81h1.46v1.46h-1.46zM43.05 19.70h1.46v1.46h-1.46zM43.05 21.65h1.46v1.46h-1.46zM43.05 23.59h1.46v1.46h-1.46zM43.05 29.43h1.46v1.46h-1.46zM43.05 41.11h1.46v1.46h-1.46zM43.05 43.05h1.46v1.46h-1.46zM43.05 45.00h1.46v1.46h-1.46zM43.05 48.89h1.46v1.46h-1.46zM43.05 50.84h1.46v1.46h-1.46zM43.05 52.78h1.46v1.46h-1.46zM43.05 60.57h1.46v1.46h-1.46zM43.05 62.51h1.46v1.46h-1.46zM43.05 64.46h1.46v1.46h-1.46zM43.05 68.35h1.46v1.46h-1.46zM43.05 70.30h1.46v1.46h-1.46zM45.00 4.14h1.46v1.46h-1.46zM45.00 6.08h1.46v1.46h-1.46zM45.00 17.76h1.46v1.46h-1.46zM45.00 23.59h1.46v1.46h-1.46zM45.00 25.54h1.46v1.46h-1.46zM45.00 27.49h1.46v1.46h-1.46zM45.00 29.43h1.46v1.46h-1.46zM45.00 33.32h1.46v1.46h-1.46zM45.00 37.22h1.46v1.46h-1.46zM45.00 39.16h1.46v1.46h-1.46zM45.00 43.05h1.46v1.46h-1.46zM45.00 45.00h1.46v1.46h-1.46zM45.00 46.95h1.46v1.46h-1.46zM45.00 52.78h1.46v1.46h-1.46zM45.00 54.73h1.46v1.46h-1.46zM45.00 58.62h1.46v1.46h-1.46zM45.00 62.51h1.46v1.46h-1.46zM46.95 0.24h1.46v1.46h-1.46zM46.95 2.19h1.46v1.46h-1.46zM46.95 4.14h1.46v1.46h-1.46zM46.95 8.03h1.46v1.46h-1.46zM46.95 9.97h1.46v1.46h-1.46zM46.95 11.92h1.46v1.46h-1.46zM46.95 15.81h1.46v1.46h-1.46zM46.95 19.70h1.46v1.46h-1.46zM46.95 21.65h1.46v1.46h-1.46zM46.95 23.59h1.46v1.46h-1.46zM46.95 35.27h1.46v1.46h-1.46zM46.95 39.16h1.46v1.46h-1.46zM46.95 41.11h1.46v1.46h-1.46zM46.95 48.89h1.46v1.46h-1.46zM46.95 52.78h1.46v1.46h-1.46zM46.95 56.68h1.46v1.46h-1.46zM46.95 58.62h1.46v1.46h-1.46zM46.95 60.57h1.46v1.46h-1.46zM46.95 62.51h1.46v1.46h-1.46zM46.95 68.35h1.46v1.46h-1.46zM48.89 2.19h1.46v1.46h-1.46zM48.89 4.14h1.46v1.46h-1.46zM48.89 8.03h1.46v1.46h-1.46zM48.89 9.97h1.46v1.46h-1.46zM48.89 13.86h1.46v1.46h-1.46zM48.89 15.81h1.46v1.46h-1.46zM48.89 17.76h1.46v1.46h-1.46zM48.89 33.32h1.46v1.46h-1.46zM48.89 41.11h1.46v1.46h-1.46zM48.89 45.00h1.46v1.46h-1.46zM48.89 50.84h1.46v1.46h-1.46zM48.89 54.73h1.46v1.46h-1.46zM48.89 56.68h1.46v1.46h-1.46zM48.89 60.57h1.46v1.46h-1.46zM48.89 66.41h1.46v1.46h-1.46zM48.89 70.30h1.46v1.46h-1.46zM50.84 0.24h1.46v1.46h-1.46zM50.84 2.19h1.46v1.46h-1.46zM50.84 8.03h1.46v1.46h-1.46zM50.84 9.97h1.46v1.46h-1.46zM50.84 11.92h1.46v1.46h-1.46zM50.84 13.86h1.46v1.46h-1.46zM50.84 15.81h1.46v1.46h-1.46zM50.84 17.76h1.46v1.46h-1.46zM50.84 19.70h1.46v1.46h-1.46zM50.84 31.38h1.46v1.46h-1.46zM50.84 33.32h1.46v1.46h-1.46zM50.84 35.27h1.46v1.46h-1.46zM50.84 37.22h1.46v1.46h-1.46zM50.84 43.05h1.46v1.46h-1.46zM50.84 46.95h1.46v1.46h-1.46zM50.84 48.89h1.46v1.46h-1.46zM50.84 54.73h1.46v1.46h-1.46zM50.84 56.68h1.46v1.46h-1.46zM50.84 60.57h1.46v1.46h-1.46zM50.84 62.51h1.46v1.46h-1.46zM50.84 68.35h1.46v1.46h-1.46zM50.84 70.30h1.46v1.46h-1.46zM52.78 0.24h1.46v1.46h-1.46zM52.78 4.14h1.46v1.46h-1.46zM52.78 13.86h1.46v1.46h-1.46zM52.78 15.81h1.46v1.46h-1.46zM52.78 17.76h1.46v1.46h-1.46zM52.78 19.70h1.46v1.46h-1.46zM52.78 21.65h1.46v1.46h-1.46zM52.78 23.59h1.46v1.46h-1.46zM52.78 27.49h1.46v1.46h-1.46zM52.78 29.43h1.46v1.46h-1.46zM52.78 31.38h1.46v1.46h-1.46zM52.78 35.27h1.46v1.46h-1.46zM52.78 37.22h1.46v1.46h-1.46zM52.78 39.16h1.46v1.46h-1.46zM52.78 41.11h1.46v1.46h-1.46zM52.78 50.84h1.46v1.46h-1.46zM52.78 62.51h1.46v1.46h-1.46zM54.73 2.19h1.46v1.46h-1.46zM54.73 4.14h1.46v1.46h-1.46zM54.73 6.08h1.46v1.46h-1.46zM54.73 11.92h1.46v1.46h-1.46zM54.73 15.81h1.46v1.46h-1.46zM54.73 25.54h1.46v1.46h-1.46zM54.73 29.43h1.46v1.46h-1.46zM54.73 31.38h1.46v1.46h-1.46zM54.73 39.16h1.46v1.46h-1.46zM54.73 41.11h1.46v1.46h-1.46zM54.73 43.05h1.46v1.46h-1.46zM54.73 46.95h1.46v1.46h-1.46zM54.73 50.84h1.46v1.46h-1.46zM54.73 62.51h1.46v1.46h-1.46zM54.73 66.41h1.46v1.46h-1.46zM56.68 19.70h1.46v1.46h-1.46zM56.68 25.54h1.46v1.46h-1.46zM56.68 27.49h1.46v1.46h-1.46zM56.68 33.32h1.46v1.46h-1.46zM56.68 37.22h1.46v1.46h-1.46zM56.68 46.95h1.46v1.46h-1.46zM56.68 50.84h1.46v1.46h-1.46zM56.68 62.51h1.46v1.46h-1.46zM56.68 66.41h1.46v1.46h-1.46zM56.68 68.35h1.46v1.46h-1.46zM58.62 17.76h1.46v1.46h-1.46zM58.62 19.70h1.46v1.46h-1.46zM58.62 21.65h1.46v1.46h-1.46zM58.62 23.59h1.46v1.46h-1.46zM58.62 25.54h1.46v1.46h-1.46zM58.62 29.43h1.46v1.46h-1.46zM58.62 31.38h1.46v1.46h-1.46zM58.62 33.32h1.46v1.46h-1.46zM58.62 35.27h1.46v1.46h-1.46zM58.62 46.95h1.46v1.46h-1.46zM58.62 48.89h1.46v1.46h-1.46zM58.62 62.51h1.46v1.46h-1.46zM58.62 64.46h1.46v1.46h-1.46zM58.62 66.41h1.46v1.46h-1.46zM58.62 68.35h1.46v1.46h-1.46zM60.57 15.81h1.46v1.46h-1.46zM60.57 17.76h1.46v1.46h-1.46zM60.57 21.65h1.46v1.46h-1.46zM60.57 25.54h1.46v1.46h-1.46zM60.57 33.32h1.46v1.46h-1.46zM60.57 35.27h1.46v1.46h-1.46zM60.57 39.16h1.46v1.46h-1.46zM60.57 41.11h1.46v1.46h-1.46zM60.57 46.95h1.46v1.46h-1.46zM60.57 62.51h1.46v1.46h-1.46zM60.57 64.46h1.46v1.46h-1.46zM60.57 66.41h1.46v1.46h-1.46zM60.57 70.30h1.46v1.46h-1.46zM62.51 15.81h1.46v1.46h-1.46zM62.51 17.76h1.46v1.46h-1.46zM62.51 19.70h1.46v1.46h-1.46zM62.51 21.65h1.46v1.46h-1.46zM62.51 25.54h1.46v1.46h-1.46zM62.51 27.49h1.46v1.46h-1.46zM62.51 35.27h1.46v1.46h-1.46zM62.51 37.22h1.46v1.46h-1.46zM62.51 41.11h1.46v1.46h-1.46zM62.51 45.00h1.46v1.46h-1.46zM62.51 46.95h1.46v1.46h-1.46zM62.51 48.89h1.46v1.46h-1.46zM62.51 56.68h1.46v1.46h-1.46zM62.51 60.57h1.46v1.46h-1.46zM62.51 66.41h1.46v1.46h-1.46zM64.46 17.76h1.46v1.46h-1.46zM64.46 23.59h1.46v1.46h-1.46zM64.46 25.54h1.46v1.46h-1.46zM64.46 27.49h1.46v1.46h-1.46zM64.46 29.43h1.46v1.46h-1.46zM64.46 33.32h1.46v1.46h-1.46zM64.46 37.22h1.46v1.46h-1.46zM64.46 39.16h1.46v1.46h-1.46zM64.46 52.78h1.46v1.46h-1.46zM64.46 56.68h1.46v1.46h-1.46zM64.46 58.62h1.46v1.46h-1.46zM64.46 62.51h1.46v1.46h-1.46zM64.46 66.41h1.46v1.46h-1.46zM64.46 68.35h1.46v1.46h-1.46zM64.46 70.30h1.46v1.46h-1.46zM66.41 25.54h1.46v1.46h-1.46zM66.41 29.43h1.46v1.46h-1.46zM66.41 31.38h1.46v1.46h-1.46zM66.41 37.22h1.46v1.46h-1.46zM66.41 41.11h1.46v1.46h-1.46zM66.41 45.00h1.46v1.46h-1.46zM66.41 46.95h1.46v1.46h-1.46zM66.41 56.68h1.46v1.46h-1.46zM66.41 60.57h1.46v1.46h-1.46zM66.41 62.51h1.46v1.46h-1.46zM66.41 68.35h1.46v1.46h-1.46zM68.35 15.81h1.46v1.46h-1.46zM68.35 19.70h1.46v1.46h-1.46zM68.35 21.65h1.46v1.46h-1.46zM68.35 27.49h1.46v1.46h-1.46zM68.35 33.32h1.46v1.46h-1.46zM68.35 35.27h1.46v1.46h-1.46zM68.35 39.16h1.46v1.46h-1.46zM68.35 41.11h1.46v1.46h-1.46zM68.35 48.89h1.46v1.46h-1.46zM68.35 50.84h1.46v1.46h-1.46zM68.35 52.78h1.46v1.46h-1.46zM68.35 56.68h1.46v1.46h-1.46zM68.35 58.62h1.46v1.46h-1.46zM68.35 60.57h1.46v1.46h-1.46zM68.35 62.51h1.46v1.46h-1.46zM68.35 64.46h1.46v1.46h-1.46zM70.30 23.59h1.46v1.46h-1.46zM70.30 27.49h1.46v1.46h-1.46zM70.30 31.38h1.46v1.46h-1.46zM70.30 33.32h1.46v1.46h-1.46zM70.30 37.22h1.46v1.46h-1.46zM70.30 39.16h1.46v1.46h-1.46zM70.30 45.00h1.46v1.46h-1.46zM70.30 46.95h1.46v1.46h-1.46zM70.30 48.89h1.46v1.46h-1.46zM70.30 50.84h1.46v1.46h-1.46zM70.30 54.73h1.46v1.46h-1.46zM70.30 56.68h1.46v1.46h-1.46zM70.30 58.62h1.46v1.46h-1.46zM70.30 62.51h1.46v1.46h-1.46zM70.30 68.35h1.46v1.46h-1.46zM70.30 70.30h1.46v1.46h-1.46z" fill="#5a5a5a"/><rect x="27.44" y="27.44" width="17.12" height="17.12" fill="#fff"/><rect x="28.44" y="28.44" width="15.12" height="15.12" fill="#1f8fd6"/><path d="M32.00 34.50 q2 -3 4 0 q2 3 4 0" fill="none" stroke="#fff" stroke-width="1.2"/><rect x="31.50" y="37.50" width="9" height="1.5" fill="#cfe6f7"/></svg><div class="hv" style="left:1515px;top:294px">提交申请 <svg width="14" height="14" viewBox="0 0 14 14" style="vertical-align:-2px;margin-left:3px"><circle cx="7" cy="7" r="7" fill="#1a6cff"/><path d="M5.6 3 L9.2 7 L5.6 11" fill="none" stroke="#fff" stroke-width="1.1"/></svg></div><div class="abs" style="left:220px;top:346px;width:1674px;height:488px;background:linear-gradient(180deg,#f9fafc 0px,#ffffff 16px);box-shadow:2px 3px 10px rgba(60,80,130,.08)"></div><div class="abs" style="left:240px;top:366px;width:1634px;height:40px;background:#f5f8fd;border-bottom:1px solid #e4e7ed"></div><div class="th" style="left:250px">版本号</div><div class="th" style="left:370px">版本描述</div><div class="th" style="left:806px">创建时间</div><div class="th" style="left:986px">SDK状态</div><div class="th" style="left:1275px">固件状态</div><div class="th" style="left:1564px">操作</div><div class="abs" style="left:240px;top:406px;width:1634px;height:68px;background:#fff;border-bottom:1px solid #ebeef5"></div><div class="td dg" style="left:250px;top:430px">20241231002</div><div class="td" style="left:375px;top:430px"><svg width="15" height="15" viewBox="0 0 15 15" style="vertical-align:-2px"><path d="M7.4 1.55 L10.8 3.25 L5.6 13.65 L2.2 11.95 Z M6.6 3.4 L10 5.1 M2.2 11.95 L2.3 13.9 L5.6 13.65" fill="none" stroke="#555" stroke-width="1" stroke-linejoin="round"/><path d="M7 13.5 H13.2" stroke="#444" stroke-width="1"/></svg></div><div class="td dg" style="left:806px;top:430px">2024-12-31 15:29:09</div><div class="tag" style="left:986px;top:426px;width:58px">已生成</div><div class="tag" style="left:1275px;top:426px;width:70px">生成成功</div><div class="op" style="left:1565px;top:430px;color:#1a6cff">查看</div><div class="op" style="left:1617px;top:430px;color:#1a6cff">继承</div><div class="op" style="left:1668px;top:430px;color:#13b85e">下载固件</div><div class="op" style="left:1746px;top:430px;color:#f56c6c">删除</div><div class="op" style="left:1797px;top:430px;color:#1a6cff">更多</div><div class="dv" style="left:1606px;top:433px"></div><div class="dv" style="left:1657px;top:433px"></div><div class="dv" style="left:1736px;top:433px"></div><div class="dv" style="left:1788px;top:433px"></div><svg class="abs" style="left:1831px;top:437px" width="12" height="7" viewBox="0 0 12 7"><path d="M1.2 1.4 L6 6 L10.8 1.4" fill="none" stroke="#1a6cff" stroke-width="1"/></svg><div class="abs" style="left:240px;top:474px;width:1634px;height:68px;background:#fff;border-bottom:1px solid #ebeef5"></div><div class="td dg" style="left:250px;top:498px">20241231001</div><div class="td" style="left:375px;top:498px"><svg width="15" height="15" viewBox="0 0 15 15" style="vertical-align:-2px"><path d="M7.4 1.55 L10.8 3.25 L5.6 13.65 L2.2 11.95 Z M6.6 3.4 L10 5.1 M2.2 11.95 L2.3 13.9 L5.6 13.65" fill="none" stroke="#555" stroke-width="1" stroke-linejoin="round"/><path d="M7 13.5 H13.2" stroke="#444" stroke-width="1"/></svg></div><div class="td dg" style="left:806px;top:498px">2024-12-31 10:49:20</div><div class="tag" style="left:986px;top:494px;width:58px">已生成</div><div class="tag" style="left:1275px;top:494px;width:70px">生成成功</div><div class="op" style="left:1565px;top:498px;color:#1a6cff">查看</div><div class="op" style="left:1617px;top:498px;color:#1a6cff">继承</div><div class="op" style="left:1668px;top:498px;color:#13b85e">下载固件</div><div class="op" style="left:1746px;top:498px;color:#f56c6c">删除</div><div class="op" style="left:1797px;top:498px;color:#1a6cff">更多</div><div class="dv" style="left:1606px;top:501px"></div><div class="dv" style="left:1657px;top:501px"></div><div class="dv" style="left:1736px;top:501px"></div><div class="dv" style="left:1788px;top:501px"></div><svg class="abs" style="left:1831px;top:505px" width="12" height="7" viewBox="0 0 12 7"><path d="M1.2 1.4 L6 6 L10.8 1.4" fill="none" stroke="#1a6cff" stroke-width="1"/></svg><div class="abs" style="left:240px;top:542px;width:1634px;height:68px;background:#fff;border-bottom:1px solid #ebeef5"></div><div class="td dg" style="left:250px;top:566px">20241225001</div><div class="td" style="left:375px;top:566px"><svg width="15" height="15" viewBox="0 0 15 15" style="vertical-align:-2px"><path d="M7.4 1.55 L10.8 3.25 L5.6 13.65 L2.2 11.95 Z M6.6 3.4 L10 5.1 M2.2 11.95 L2.3 13.9 L5.6 13.65" fill="none" stroke="#555" stroke-width="1" stroke-linejoin="round"/><path d="M7 13.5 H13.2" stroke="#444" stroke-width="1"/></svg></div><div class="td dg" style="left:806px;top:566px">2024-12-25 08:47:48</div><div class="tag" style="left:986px;top:562px;width:58px">已生成</div><div class="tag" style="left:1275px;top:562px;width:70px">生成成功</div><div class="op" style="left:1565px;top:566px;color:#1a6cff">查看</div><div class="op" style="left:1617px;top:566px;color:#1a6cff">继承</div><div class="op" style="left:1668px;top:566px;color:#13b85e">下载固件</div><div class="op" style="left:1746px;top:566px;color:#f56c6c">删除</div><div class="op" style="left:1797px;top:566px;color:#1a6cff">更多</div><div class="dv" style="left:1606px;top:569px"></div><div class="dv" style="left:1657px;top:569px"></div><div class="dv" style="left:1736px;top:569px"></div><div class="dv" style="left:1788px;top:569px"></div><svg class="abs" style="left:1831px;top:573px" width="12" height="7" viewBox="0 0 12 7"><path d="M1.2 1.4 L6 6 L10.8 1.4" fill="none" stroke="#1a6cff" stroke-width="1"/></svg><div class="abs" style="left:240px;top:610px;width:1634px;height:68px;background:#f5f7fa;border-bottom:1px solid #ebeef5"></div><div class="td dg" style="left:250px;top:634px">20241223002</div><div class="td" style="left:375px;top:634px"><svg width="15" height="15" viewBox="0 0 15 15" style="vertical-align:-2px"><path d="M7.4 1.55 L10.8 3.25 L5.6 13.65 L2.2 11.95 Z M6.6 3.4 L10 5.1 M2.2 11.95 L2.3 13.9 L5.6 13.65" fill="none" stroke="#555" stroke-width="1" stroke-linejoin="round"/><path d="M7 13.5 H13.2" stroke="#444" stroke-width="1"/></svg></div><div class="td dg" style="left:806px;top:634px">2024-12-23 09:15:35</div><div class="tag" style="left:986px;top:630px;width:58px">已生成</div><div class="tag" style="left:1275px;top:630px;width:70px">生成成功</div><div class="op" style="left:1565px;top:634px;color:#1a6cff">查看</div><div class="op" style="left:1617px;top:634px;color:#1a6cff">继承</div><div class="op" style="left:1668px;top:634px;color:#13b85e">下载固件</div><div class="op" style="left:1746px;top:634px;color:#f56c6c">删除</div><div class="op" style="left:1797px;top:634px;color:#1a6cff">更多</div><div class="dv" style="left:1606px;top:637px"></div><div class="dv" style="left:1657px;top:637px"></div><div class="dv" style="left:1736px;top:637px"></div><div class="dv" style="left:1788px;top:637px"></div><svg class="abs" style="left:1831px;top:641px" width="12" height="7" viewBox="0 0 12 7"><path d="M1.2 1.4 L6 6 L10.8 1.4" fill="none" stroke="#1a6cff" stroke-width="1"/></svg><div class="abs" style="left:240px;top:678px;width:1634px;height:68px;background:#fff;border-bottom:1px solid #ebeef5"></div><div class="td dg" style="left:250px;top:702px">20241223001</div><div class="td" style="left:370px;top:702px">串口修改 <svg width="15" height="15" viewBox="0 0 15 15" style="vertical-align:-2px"><path d="M7.4 1.55 L10.8 3.25 L5.6 13.65 L2.2 11.95 Z M6.6 3.4 L10 5.1 M2.2 11.95 L2.3 13.9 L5.6 13.65" fill="none" stroke="#555" stroke-width="1" stroke-linejoin="round"/><path d="M7 13.5 H13.2" stroke="#444" stroke-width="1"/></svg></div><div class="td dg" style="left:806px;top:702px">2024-12-23 09:13:15</div><div class="tag" style="left:986px;top:698px;width:58px">已生成</div><div class="tag" style="left:1275px;top:698px;width:70px">生成成功</div><div class="op" style="left:1565px;top:702px;color:#1a6cff">查看</div><div class="op" style="left:1617px;top:702px;color:#1a6cff">继承</div><div class="op" style="left:1668px;top:702px;color:#13b85e">下载固件</div><div class="op" style="left:1746px;top:702px;color:#f56c6c">删除</div><div class="op" style="left:1797px;top:702px;color:#1a6cff">更多</div><div class="dv" style="left:1606px;top:705px"></div><div class="dv" style="left:1657px;top:705px"></div><div class="dv" style="left:1736px;top:705px"></div><div class="dv" style="left:1788px;top:705px"></div><svg class="abs" style="left:1831px;top:709px" width="12" height="7" viewBox="0 0 12 7"><path d="M1.2 1.4 L6 6 L10.8 1.4" fill="none" stroke="#1a6cff" stroke-width="1"/></svg><div class="t" style="left:250px;top:770px;font-size:13.5px;line-height:20px;color:#555">共 10 条</div><div class="abs" style="left:314px;top:767px;width:100px;height:28px;border:1px solid #dcdfe6;border-radius:3px;background:#fff"></div><div class="t" style="left:337px;top:770px;font-size:13px;line-height:20px;color:#555">5条/页</div><svg class="abs" style="left:396px;top:777px" width="10" height="6" viewBox="0 0 10 6"><path d="M1 1 L5 5 L9 1" fill="none" stroke="#b0b3b8" stroke-width="1"/></svg><svg class="abs" style="left:438px;top:773px" width="10" height="13" viewBox="0 0 10 13"><path d="M7.6 1.9 L2.6 6.4 L7.6 10.9" fill="none" stroke="#b8bbc0" stroke-width="1.5"/></svg><div class="t" style="left:478px;top:770px;font-size:14px;line-height:20px;color:#1a6cff;font-weight:bold">1</div><div class="t" style="left:514px;top:770px;font-size:14px;line-height:20px;color:#222;font-weight:bold">2</div><svg class="abs" style="left:551px;top:773px" width="10" height="13" viewBox="0 0 10 13"><path d="M2.8 1.9 L7.8 6.4 L2.8 10.9" fill="none" stroke="#333" stroke-width="1.5"/></svg><div class="t" style="left:594px;top:770px;font-size:14px;line-height:20px;color:#555">前往</div><div class="abs" style="left:625px;top:766px;width:46px;height:28px;border:1px solid #dcdfe6;border-radius:3px;background:#fff"></div><div class="t" style="left:644px;top:770px;font-size:14px;line-height:20px;color:#555">1</div><div class="t" style="left:675px;top:770px;font-size:14px;line-height:20px;color:#555">页</div><div class="abs" style="left:200px;top:854px;width:1714px;height:91px;background:#fcfcfd"></div><svg class="abs" style="left:1220px;top:876px" width="70" height="70" viewBox="0 0 70 70"><rect x="0.95" y="0.95" width="11.35" height="11.35" fill="none" stroke="#2a2a2a" stroke-width="1.89"/><rect x="3.78" y="3.78" width="5.68" height="5.68" fill="#2a2a2a"/><rect x="57.70" y="0.95" width="11.35" height="11.35" fill="none" stroke="#2a2a2a" stroke-width="1.89"/><rect x="60.54" y="3.78" width="5.68" height="5.68" fill="#2a2a2a"/><rect x="0.95" y="57.70" width="11.35" height="11.35" fill="none" stroke="#2a2a2a" stroke-width="1.89"/><rect x="3.78" y="60.54" width="5.68" height="5.68" fill="#2a2a2a"/><path d="M0.00 15.14h1.89v1.89h-1.89zM0.00 20.81h1.89v1.89h-1.89zM0.00 22.70h1.89v1.89h-1.89zM0.00 26.49h1.89v1.89h-1.89zM0.00 28.38h1.89v1.89h-1.89zM0.00 34.05h1.89v1.89h-1.89zM0.00 35.95h1.89v1.89h-1.89zM0.00 37.84h1.89v1.89h-1.89zM0.00 43.51h1.89v1.89h-1.89zM0.00 52.97h1.89v1.89h-1.89zM1.89 15.14h1.89v1.89h-1.89zM1.89 17.03h1.89v1.89h-1.89zM1.89 18.92h1.89v1.89h-1.89zM1.89 20.81h1.89v1.89h-1.89zM1.89 22.70h1.89v1.89h-1.89zM1.89 24.59h1.89v1.89h-1.89zM1.89 26.49h1.89v1.89h-1.89zM1.89 28.38h1.89v1.89h-1.89zM1.89 32.16h1.89v1.89h-1.89zM1.89 35.95h1.89v1.89h-1.89zM1.89 39.73h1.89v1.89h-1.89zM1.89 41.62h1.89v1.89h-1.89zM1.89 51.08h1.89v1.89h-1.89zM1.89 52.97h1.89v1.89h-1.89zM3.78 15.14h1.89v1.89h-1.89zM3.78 17.03h1.89v1.89h-1.89zM3.78 20.81h1.89v1.89h-1.89zM3.78 24.59h1.89v1.89h-1.89zM3.78 30.27h1.89v1.89h-1.89zM3.78 32.16h1.89v1.89h-1.89zM3.78 35.95h1.89v1.89h-1.89zM3.78 39.73h1.89v1.89h-1.89zM3.78 41.62h1.89v1.89h-1.89zM3.78 47.30h1.89v1.89h-1.89zM3.78 49.19h1.89v1.89h-1.89zM3.78 51.08h1.89v1.89h-1.89zM5.68 17.03h1.89v1.89h-1.89zM5.68 18.92h1.89v1.89h-1.89zM5.68 20.81h1.89v1.89h-1.89zM5.68 22.70h1.89v1.89h-1.89zM5.68 26.49h1.89v1.89h-1.89zM5.68 30.27h1.89v1.89h-1.89zM5.68 32.16h1.89v1.89h-1.89zM5.68 35.95h1.89v1.89h-1.89zM5.68 39.73h1.89v1.89h-1.89zM5.68 41.62h1.89v1.89h-1.89zM5.68 43.51h1.89v1.89h-1.89zM5.68 45.41h1.89v1.89h-1.89zM5.68 51.08h1.89v1.89h-1.89zM7.57 15.14h1.89v1.89h-1.89zM7.57 17.03h1.89v1.89h-1.89zM7.57 22.70h1.89v1.89h-1.89zM7.57 26.49h1.89v1.89h-1.89zM7.57 28.38h1.89v1.89h-1.89zM7.57 32.16h1.89v1.89h-1.89zM7.57 34.05h1.89v1.89h-1.89zM7.57 35.95h1.89v1.89h-1.89zM7.57 37.84h1.89v1.89h-1.89zM7.57 41.62h1.89v1.89h-1.89zM7.57 45.41h1.89v1.89h-1.89zM7.57 47.30h1.89v1.89h-1.89zM7.57 51.08h1.89v1.89h-1.89zM9.46 17.03h1.89v1.89h-1.89zM9.46 18.92h1.89v1.89h-1.89zM9.46 24.59h1.89v1.89h-1.89zM9.46 26.49h1.89v1.89h-1.89zM9.46 32.16h1.89v1.89h-1.89zM9.46 39.73h1.89v1.89h-1.89zM9.46 41.62h1.89v1.89h-1.89zM9.46 43.51h1.89v1.89h-1.89zM9.46 47.30h1.89v1.89h-1.89zM9.46 51.08h1.89v1.89h-1.89zM11.35 15.14h1.89v1.89h-1.89zM11.35 18.92h1.89v1.89h-1.89zM11.35 22.70h1.89v1.89h-1.89zM11.35 26.49h1.89v1.89h-1.89zM11.35 30.27h1.89v1.89h-1.89zM11.35 34.05h1.89v1.89h-1.89zM11.35 37.84h1.89v1.89h-1.89zM11.35 41.62h1.89v1.89h-1.89zM11.35 45.41h1.89v1.89h-1.89zM11.35 49.19h1.89v1.89h-1.89zM11.35 52.97h1.89v1.89h-1.89zM13.24 17.03h1.89v1.89h-1.89zM13.24 18.92h1.89v1.89h-1.89zM13.24 22.70h1.89v1.89h-1.89zM13.24 24.59h1.89v1.89h-1.89zM13.24 32.16h1.89v1.89h-1.89zM13.24 35.95h1.89v1.89h-1.89zM13.24 37.84h1.89v1.89h-1.89zM13.24 39.73h1.89v1.89h-1.89zM13.24 41.62h1.89v1.89h-1.89zM13.24 43.51h1.89v1.89h-1.89zM13.24 45.41h1.89v1.89h-1.89zM13.24 47.30h1.89v1.89h-1.89zM13.24 51.08h1.89v1.89h-1.89zM13.24 52.97h1.89v1.89h-1.89zM15.14 9.46h1.89v1.89h-1.89zM15.14 11.35h1.89v1.89h-1.89zM15.14 13.24h1.89v1.89h-1.89zM15.14 15.14h1.89v1.89h-1.89zM15.14 22.70h1.89v1.89h-1.89zM15.14 26.49h1.89v1.89h-1.89zM15.14 30.27h1.89v1.89h-1.89zM15.14 34.05h1.89v1.89h-1.89zM15.14 35.95h1.89v1.89h-1.89zM15.14 49.19h1.89v1.89h-1.89zM15.14 56.76h1.89v1.89h-1.89zM15.14 66.22h1.89v1.89h-1.89zM17.03 1.89h1.89v1.89h-1.89zM17.03 13.24h1.89v1.89h-1.89zM17.03 18.92h1.89v1.89h-1.89zM17.03 22.70h1.89v1.89h-1.89zM17.03 26.49h1.89v1.89h-1.89zM17.03 30.27h1.89v1.89h-1.89zM17.03 32.16h1.89v1.89h-1.89zM17.03 35.95h1.89v1.89h-1.89zM17.03 41.62h1.89v1.89h-1.89zM17.03 43.51h1.89v1.89h-1.89zM17.03 45.41h1.89v1.89h-1.89zM17.03 49.19h1.89v1.89h-1.89zM17.03 51.08h1.89v1.89h-1.89zM17.03 56.76h1.89v1.89h-1.89zM17.03 60.54h1.89v1.89h-1.89zM17.03 64.32h1.89v1.89h-1.89zM17.03 66.22h1.89v1.89h-1.89zM18.92 3.78h1.89v1.89h-1.89zM18.92 7.57h1.89v1.89h-1.89zM18.92 9.46h1.89v1.89h-1.89zM18.92 11.35h1.89v1.89h-1.89zM18.92 13.24h1.89v1.89h-1.89zM18.92 22.70h1.89v1.89h-1.89zM18.92 24.59h1.89v1.89h-1.89zM18.92 26.49h1.89v1.89h-1.89zM18.92 28.38h1.89v1.89h-1.89zM18.92 30.27h1.89v1.89h-1.89zM18.92 32.16h1.89v1.89h-1.89zM18.92 35.95h1.89v1.89h-1.89zM18.92 37.84h1.89v1.89h-1.89zM18.92 43.51h1.89v1.89h-1.89zM18.92 45.41h1.89v1.89h-1.89zM18.92 47.30h1.89v1.89h-1.89zM18.92 51.08h1.89v1.89h-1.89zM18.92 56.76h1.89v1.89h-1.89zM18.92 60.54h1.89v1.89h-1.89zM18.92 62.43h1.89v1.89h-1.89zM18.92 64.32h1.89v1.89h-1.89zM18.92 66.22h1.89v1.89h-1.89zM20.81 0.00h1.89v1.89h-1.89zM20.81 1.89h1.89v1.89h-1.89zM20.81 3.78h1.89v1.89h-1.89zM20.81 7.57h1.89v1.89h-1.89zM20.81 20.81h1.89v1.89h-1.89zM20.81 22.70h1.89v1.89h-1.89zM20.81 24.59h1.89v1.89h-1.89zM20.81 26.49h1.89v1.89h-1.89zM20.81 28.38h1.89v1.89h-1.89zM20.81 32.16h1.89v1.89h-1.89zM20.81 34.05h1.89v1.89h-1.89zM20.81 35.95h1.89v1.89h-1.89zM20.81 39.73h1.89v1.89h-1.89zM20.81 45.41h1.89v1.89h-1.89zM20.81 51.08h1.89v1.89h-1.89zM20.81 56.76h1.89v1.89h-1.89zM20.81 58.65h1.89v1.89h-1.89zM20.81 64.32h1.89v1.89h-1.89zM22.70 3.78h1.89v1.89h-1.89zM22.70 7.57h1.89v1.89h-1.89zM22.70 11.35h1.89v1.89h-1.89zM22.70 18.92h1.89v1.89h-1.89zM22.70 26.49h1.89v1.89h-1.89zM22.70 30.27h1.89v1.89h-1.89zM22.70 35.95h1.89v1.89h-1.89zM22.70 37.84h1.89v1.89h-1.89zM22.70 39.73h1.89v1.89h-1.89zM22.70 45.41h1.89v1.89h-1.89zM22.70 47.30h1.89v1.89h-1.89zM22.70 51.08h1.89v1.89h-1.89zM22.70 54.86h1.89v1.89h-1.89zM22.70 56.76h1.89v1.89h-1.89zM22.70 60.54h1.89v1.89h-1.89zM22.70 62.43h1.89v1.89h-1.89zM22.70 64.32h1.89v1.89h-1.89zM24.59 3.78h1.89v1.89h-1.89zM24.59 7.57h1.89v1.89h-1.89zM24.59 9.46h1.89v1.89h-1.89zM24.59 13.24h1.89v1.89h-1.89zM24.59 15.14h1.89v1.89h-1.89zM24.59 20.81h1.89v1.89h-1.89zM24.59 26.49h1.89v1.89h-1.89zM24.59 28.38h1.89v1.89h-1.89zM24.59 34.05h1.89v1.89h-1.89zM24.59 39.73h1.89v1.89h-1.89zM24.59 43.51h1.89v1.89h-1.89zM24.59 45.41h1.89v1.89h-1.89zM24.59 47.30h1.89v1.89h-1.89zM24.59 51.08h1.89v1.89h-1.89zM24.59 54.86h1.89v1.89h-1.89zM24.59 56.76h1.89v1.89h-1.89zM24.59 62.43h1.89v1.89h-1.89zM24.59 66.22h1.89v1.89h-1.89zM24.59 68.11h1.89v1.89h-1.89zM26.49 0.00h1.89v1.89h-1.89zM26.49 5.68h1.89v1.89h-1.89zM26.49 7.57h1.89v1.89h-1.89zM26.49 9.46h1.89v1.89h-1.89zM26.49 11.35h1.89v1.89h-1.89zM26.49 13.24h1.89v1.89h-1.89zM26.49 18.92h1.89v1.89h-1.89zM26.49 20.81h1.89v1.89h-1.89zM26.49 22.70h1.89v1.89h-1.89zM26.49 28.38h1.89v1.89h-1.89zM26.49 32.16h1.89v1.89h-1.89zM26.49 34.05h1.89v1.89h-1.89zM26.49 35.95h1.89v1.89h-1.89zM26.49 39.73h1.89v1.89h-1.89zM26.49 41.62h1.89v1.89h-1.89zM26.49 45.41h1.89v1.89h-1.89zM26.49 49.19h1.89v1.89h-1.89zM26.49 51.08h1.89v1.89h-1.89zM26.49 52.97h1.89v1.89h-1.89zM26.49 54.86h1.89v1.89h-1.89zM26.49 56.76h1.89v1.89h-1.89zM26.49 58.65h1.89v1.89h-1.89zM26.49 60.54h1.89v1.89h-1.89zM26.49 62.43h1.89v1.89h-1.89zM26.49 64.32h1.89v1.89h-1.89zM26.49 66.22h1.89v1.89h-1.89zM26.49 68.11h1.89v1.89h-1.89zM28.38 3.78h1.89v1.89h-1.89zM28.38 13.24h1.89v1.89h-1.89zM28.38 20.81h1.89v1.89h-1.89zM28.38 22.70h1.89v1.89h-1.89zM28.38 26.49h1.89v1.89h-1.89zM28.38 32.16h1.89v1.89h-1.89zM28.38 34.05h1.89v1.89h-1.89zM28.38 37.84h1.89v1.89h-1.89zM28.38 39.73h1.89v1.89h-1.89zM28.38 43.51h1.89v1.89h-1.89zM28.38 47.30h1.89v1.89h-1.89zM28.38 49.19h1.89v1.89h-1.89zM28.38 52.97h1.89v1.89h-1.89zM28.38 54.86h1.89v1.89h-1.89zM28.38 62.43h1.89v1.89h-1.89zM28.38 64.32h1.89v1.89h-1.89zM28.38 68.11h1.89v1.89h-1.89zM30.27 1.89h1.89v1.89h-1.89zM30.27 3.78h1.89v1.89h-1.89zM30.27 5.68h1.89v1.89h-1.89zM30.27 7.57h1.89v1.89h-1.89zM30.27 11.35h1.89v1.89h-1.89zM30.27 13.24h1.89v1.89h-1.89zM30.27 17.03h1.89v1.89h-1.89zM30.27 18.92h1.89v1.89h-1.89zM30.27 20.81h1.89v1.89h-1.89zM30.27 28.38h1.89v1.89h-1.89zM30.27 30.27h1.89v1.89h-1.89zM30.27 34.05h1.89v1.89h-1.89zM30.27 37.84h1.89v1.89h-1.89zM30.27 39.73h1.89v1.89h-1.89zM30.27 41.62h1.89v1.89h-1.89zM30.27 43.51h1.89v1.89h-1.89zM30.27 47.30h1.89v1.89h-1.89zM30.27 52.97h1.89v1.89h-1.89zM30.27 54.86h1.89v1.89h-1.89zM30.27 58.65h1.89v1.89h-1.89zM30.27 60.54h1.89v1.89h-1.89zM30.27 62.43h1.89v1.89h-1.89zM30.27 64.32h1.89v1.89h-1.89zM30.27 66.22h1.89v1.89h-1.89zM32.16 7.57h1.89v1.89h-1.89zM32.16 13.24h1.89v1.89h-1.89zM32.16 18.92h1.89v1.89h-1.89zM32.16 28.38h1.89v1.89h-1.89zM32.16 39.73h1.89v1.89h-1.89zM32.16 43.51h1.89v1.89h-1.89zM32.16 45.41h1.89v1.89h-1.89zM32.16 47.30h1.89v1.89h-1.89zM32.16 49.19h1.89v1.89h-1.89zM32.16 51.08h1.89v1.89h-1.89zM32.16 56.76h1.89v1.89h-1.89zM32.16 62.43h1.89v1.89h-1.89zM32.16 68.11h1.89v1.89h-1.89zM34.05 0.00h1.89v1.89h-1.89zM34.05 11.35h1.89v1.89h-1.89zM34.05 13.24h1.89v1.89h-1.89zM34.05 18.92h1.89v1.89h-1.89zM34.05 20.81h1.89v1.89h-1.89zM34.05 22.70h1.89v1.89h-1.89zM34.05 24.59h1.89v1.89h-1.89zM34.05 26.49h1.89v1.89h-1.89zM34.05 28.38h1.89v1.89h-1.89zM34.05 30.27h1.89v1.89h-1.89zM34.05 35.95h1.89v1.89h-1.89zM34.05 47.30h1.89v1.89h-1.89zM34.05 52.97h1.89v1.89h-1.89zM34.05 56.76h1.89v1.89h-1.89zM34.05 58.65h1.89v1.89h-1.89zM34.05 60.54h1.89v1.89h-1.89zM34.05 62.43h1.89v1.89h-1.89zM34.05 66.22h1.89v1.89h-1.89zM35.95 0.00h1.89v1.89h-1.89zM35.95 1.89h1.89v1.89h-1.89zM35.95 5.68h1.89v1.89h-1.89zM35.95 7.57h1.89v1.89h-1.89zM35.95 15.14h1.89v1.89h-1.89zM35.95 18.92h1.89v1.89h-1.89zM35.95 20.81h1.89v1.89h-1.89zM35.95 22.70h1.89v1.89h-1.89zM35.95 24.59h1.89v1.89h-1.89zM35.95 26.49h1.89v1.89h-1.89zM35.95 30.27h1.89v1.89h-1.89zM35.95 35.95h1.89v1.89h-1.89zM35.95 41.62h1.89v1.89h-1.89zM35.95 45.41h1.89v1.89h-1.89zM35.95 47.30h1.89v1.89h-1.89zM35.95 51.08h1.89v1.89h-1.89zM35.95 52.97h1.89v1.89h-1.89zM35.95 58.65h1.89v1.89h-1.89zM35.95 66.22h1.89v1.89h-1.89zM37.84 0.00h1.89v1.89h-1.89zM37.84 1.89h1.89v1.89h-1.89zM37.84 3.78h1.89v1.89h-1.89zM37.84 5.68h1.89v1.89h-1.89zM37.84 7.57h1.89v1.89h-1.89zM37.84 9.46h1.89v1.89h-1.89zM37.84 11.35h1.89v1.89h-1.89zM37.84 15.14h1.89v1.89h-1.89zM37.84 17.03h1.89v1.89h-1.89zM37.84 20.81h1.89v1.89h-1.89zM37.84 24.59h1.89v1.89h-1.89zM37.84 32.16h1.89v1.89h-1.89zM37.84 34.05h1.89v1.89h-1.89zM37.84 41.62h1.89v1.89h-1.89zM37.84 43.51h1.89v1.89h-1.89zM37.84 54.86h1.89v1.89h-1.89zM37.84 56.76h1.89v1.89h-1.89zM37.84 64.32h1.89v1.89h-1.89zM37.84 66.22h1.89v1.89h-1.89zM37.84 68.11h1.89v1.89h-1.89zM39.73 0.00h1.89v1.89h-1.89zM39.73 3.78h1.89v1.89h-1.89zM39.73 5.68h1.89v1.89h-1.89zM39.73 7.57h1.89v1.89h-1.89zM39.73 9.46h1.89v1.89h-1.89zM39.73 18.92h1.89v1.89h-1.89zM39.73 20.81h1.89v1.89h-1.89zM39.73 22.70h1.89v1.89h-1.89zM39.73 24.59h1.89v1.89h-1.89zM39.73 30.27h1.89v1.89h-1.89zM39.73 32.16h1.89v1.89h-1.89zM39.73 39.73h1.89v1.89h-1.89zM39.73 41.62h1.89v1.89h-1.89zM39.73 43.51h1.89v1.89h-1.89zM39.73 47.30h1.89v1.89h-1.89zM39.73 52.97h1.89v1.89h-1.89zM39.73 54.86h1.89v1.89h-1.89zM39.73 60.54h1.89v1.89h-1.89zM39.73 62.43h1.89v1.89h-1.89zM39.73 64.32h1.89v1.89h-1.89zM39.73 68.11h1.89v1.89h-1.89zM41.62 0.00h1.89v1.89h-1.89zM41.62 3.78h1.89v1.89h-1.89zM41.62 7.57h1.89v1.89h-1.89zM41.62 11.35h1.89v1.89h-1.89zM41.62 13.24h1.89v1.89h-1.89zM41.62 15.14h1.89v1.89h-1.89zM41.62 18.92h1.89v1.89h-1.89zM41.62 20.81h1.89v1.89h-1.89zM41.62 26.49h1.89v1.89h-1.89zM41.62 28.38h1.89v1.89h-1.89zM41.62 30.27h1.89v1.89h-1.89zM41.62 34.05h1.89v1.89h-1.89zM41.62 35.95h1.89v1.89h-1.89zM41.62 47.30h1.89v1.89h-1.89zM41.62 51.08h1.89v1.89h-1.89zM41.62 52.97h1.89v1.89h-1.89zM41.62 54.86h1.89v1.89h-1.89zM41.62 60.54h1.89v1.89h-1.89zM41.62 62.43h1.89v1.89h-1.89zM41.62 64.32h1.89v1.89h-1.89zM41.62 66.22h1.89v1.89h-1.89zM41.62 68.11h1.89v1.89h-1.89zM43.51 0.00h1.89v1.89h-1.89zM43.51 1.89h1.89v1.89h-1.89zM43.51 7.57h1.89v1.89h-1.89zM43.51 15.14h1.89v1.89h-1.89zM43.51 20.81h1.89v1.89h-1.89zM43.51 22.70h1.89v1.89h-1.89zM43.51 24.59h1.89v1.89h-1.89zM43.51 26.49h1.89v1.89h-1.89zM43.51 35.95h1.89v1.89h-1.89zM43.51 37.84h1.89v1.89h-1.89zM43.51 41.62h1.89v1.89h-1.89zM43.51 43.51h1.89v1.89h-1.89zM43.51 49.19h1.89v1.89h-1.89zM43.51 52.97h1.89v1.89h-1.89zM43.51 58.65h1.89v1.89h-1.89zM43.51 60.54h1.89v1.89h-1.89zM43.51 64.32h1.89v1.89h-1.89zM43.51 68.11h1.89v1.89h-1.89zM45.41 0.00h1.89v1.89h-1.89zM45.41 5.68h1.89v1.89h-1.89zM45.41 7.57h1.89v1.89h-1.89zM45.41 11.35h1.89v1.89h-1.89zM45.41 17.03h1.89v1.89h-1.89zM45.41 34.05h1.89v1.89h-1.89zM45.41 39.73h1.89v1.89h-1.89zM45.41 41.62h1.89v1.89h-1.89zM45.41 43.51h1.89v1.89h-1.89zM45.41 49.19h1.89v1.89h-1.89zM45.41 51.08h1.89v1.89h-1.89zM45.41 52.97h1.89v1.89h-1.89zM45.41 54.86h1.89v1.89h-1.89zM45.41 56.76h1.89v1.89h-1.89zM45.41 60.54h1.89v1.89h-1.89zM45.41 62.43h1.89v1.89h-1.89zM45.41 64.32h1.89v1.89h-1.89zM47.30 0.00h1.89v1.89h-1.89zM47.30 1.89h1.89v1.89h-1.89zM47.30 3.78h1.89v1.89h-1.89zM47.30 9.46h1.89v1.89h-1.89zM47.30 13.24h1.89v1.89h-1.89zM47.30 15.14h1.89v1.89h-1.89zM47.30 17.03h1.89v1.89h-1.89zM47.30 18.92h1.89v1.89h-1.89zM47.30 24.59h1.89v1.89h-1.89zM47.30 26.49h1.89v1.89h-1.89zM47.30 28.38h1.89v1.89h-1.89zM47.30 30.27h1.89v1.89h-1.89zM47.30 34.05h1.89v1.89h-1.89zM47.30 35.95h1.89v1.89h-1.89zM47.30 39.73h1.89v1.89h-1.89zM47.30 41.62h1.89v1.89h-1.89zM47.30 47.30h1.89v1.89h-1.89zM47.30 49.19h1.89v1.89h-1.89zM47.30 52.97h1.89v1.89h-1.89zM47.30 54.86h1.89v1.89h-1.89zM47.30 56.76h1.89v1.89h-1.89zM47.30 62.43h1.89v1.89h-1.89zM47.30 64.32h1.89v1.89h-1.89zM47.30 66.22h1.89v1.89h-1.89zM47.30 68.11h1.89v1.89h-1.89zM49.19 3.78h1.89v1.89h-1.89zM49.19 5.68h1.89v1.89h-1.89zM49.19 7.57h1.89v1.89h-1.89zM49.19 9.46h1.89v1.89h-1.89zM49.19 11.35h1.89v1.89h-1.89zM49.19 18.92h1.89v1.89h-1.89zM49.19 20.81h1.89v1.89h-1.89zM49.19 22.70h1.89v1.89h-1.89zM49.19 24.59h1.89v1.89h-1.89zM49.19 28.38h1.89v1.89h-1.89zM49.19 34.05h1.89v1.89h-1.89zM49.19 35.95h1.89v1.89h-1.89zM49.19 37.84h1.89v1.89h-1.89zM49.19 41.62h1.89v1.89h-1.89zM49.19 49.19h1.89v1.89h-1.89zM49.19 51.08h1.89v1.89h-1.89zM49.19 54.86h1.89v1.89h-1.89zM49.19 56.76h1.89v1.89h-1.89zM49.19 58.65h1.89v1.89h-1.89zM49.19 66.22h1.89v1.89h-1.89zM51.08 0.00h1.89v1.89h-1.89zM51.08 3.78h1.89v1.89h-1.89zM51.08 7.57h1.89v1.89h-1.89zM51.08 9.46h1.89v1.89h-1.89zM51.08 13.24h1.89v1.89h-1.89zM51.08 15.14h1.89v1.89h-1.89zM51.08 18.92h1.89v1.89h-1.89zM51.08 20.81h1.89v1.89h-1.89zM51.08 22.70h1.89v1.89h-1.89zM51.08 24.59h1.89v1.89h-1.89zM51.08 26.49h1.89v1.89h-1.89zM51.08 30.27h1.89v1.89h-1.89zM51.08 34.05h1.89v1.89h-1.89zM51.08 35.95h1.89v1.89h-1.89zM51.08 37.84h1.89v1.89h-1.89zM51.08 45.41h1.89v1.89h-1.89zM51.08 47.30h1.89v1.89h-1.89zM51.08 51.08h1.89v1.89h-1.89zM51.08 54.86h1.89v1.89h-1.89zM51.08 56.76h1.89v1.89h-1.89zM51.08 62.43h1.89v1.89h-1.89zM51.08 66.22h1.89v1.89h-1.89zM51.08 68.11h1.89v1.89h-1.89zM52.97 0.00h1.89v1.89h-1.89zM52.97 1.89h1.89v1.89h-1.89zM52.97 3.78h1.89v1.89h-1.89zM52.97 5.68h1.89v1.89h-1.89zM52.97 9.46h1.89v1.89h-1.89zM52.97 11.35h1.89v1.89h-1.89zM52.97 13.24h1.89v1.89h-1.89zM52.97 17.03h1.89v1.89h-1.89zM52.97 24.59h1.89v1.89h-1.89zM52.97 28.38h1.89v1.89h-1.89zM52.97 30.27h1.89v1.89h-1.89zM52.97 32.16h1.89v1.89h-1.89zM52.97 37.84h1.89v1.89h-1.89zM52.97 39.73h1.89v1.89h-1.89zM52.97 45.41h1.89v1.89h-1.89zM52.97 47.30h1.89v1.89h-1.89zM52.97 49.19h1.89v1.89h-1.89zM52.97 51.08h1.89v1.89h-1.89zM52.97 52.97h1.89v1.89h-1.89zM52.97 54.86h1.89v1.89h-1.89zM52.97 58.65h1.89v1.89h-1.89zM52.97 60.54h1.89v1.89h-1.89zM52.97 68.11h1.89v1.89h-1.89zM54.86 15.14h1.89v1.89h-1.89zM54.86 17.03h1.89v1.89h-1.89zM54.86 18.92h1.89v1.89h-1.89zM54.86 20.81h1.89v1.89h-1.89zM54.86 32.16h1.89v1.89h-1.89zM54.86 34.05h1.89v1.89h-1.89zM54.86 35.95h1.89v1.89h-1.89zM54.86 39.73h1.89v1.89h-1.89zM54.86 41.62h1.89v1.89h-1.89zM54.86 43.51h1.89v1.89h-1.89zM54.86 51.08h1.89v1.89h-1.89zM54.86 56.76h1.89v1.89h-1.89zM54.86 58.65h1.89v1.89h-1.89zM54.86 60.54h1.89v1.89h-1.89zM54.86 62.43h1.89v1.89h-1.89zM54.86 68.11h1.89v1.89h-1.89zM56.76 18.92h1.89v1.89h-1.89zM56.76 24.59h1.89v1.89h-1.89zM56.76 26.49h1.89v1.89h-1.89zM56.76 28.38h1.89v1.89h-1.89zM56.76 34.05h1.89v1.89h-1.89zM56.76 37.84h1.89v1.89h-1.89zM56.76 39.73h1.89v1.89h-1.89zM56.76 41.62h1.89v1.89h-1.89zM56.76 45.41h1.89v1.89h-1.89zM56.76 49.19h1.89v1.89h-1.89zM56.76 54.86h1.89v1.89h-1.89zM56.76 64.32h1.89v1.89h-1.89zM56.76 68.11h1.89v1.89h-1.89zM58.65 17.03h1.89v1.89h-1.89zM58.65 22.70h1.89v1.89h-1.89zM58.65 24.59h1.89v1.89h-1.89zM58.65 26.49h1.89v1.89h-1.89zM58.65 28.38h1.89v1.89h-1.89zM58.65 30.27h1.89v1.89h-1.89zM58.65 37.84h1.89v1.89h-1.89zM58.65 43.51h1.89v1.89h-1.89zM58.65 49.19h1.89v1.89h-1.89zM58.65 51.08h1.89v1.89h-1.89zM58.65 52.97h1.89v1.89h-1.89zM58.65 54.86h1.89v1.89h-1.89zM58.65 56.76h1.89v1.89h-1.89zM58.65 60.54h1.89v1.89h-1.89zM58.65 62.43h1.89v1.89h-1.89zM58.65 64.32h1.89v1.89h-1.89zM58.65 68.11h1.89v1.89h-1.89zM60.54 17.03h1.89v1.89h-1.89zM60.54 20.81h1.89v1.89h-1.89zM60.54 26.49h1.89v1.89h-1.89zM60.54 28.38h1.89v1.89h-1.89zM60.54 37.84h1.89v1.89h-1.89zM60.54 45.41h1.89v1.89h-1.89zM60.54 47.30h1.89v1.89h-1.89zM60.54 52.97h1.89v1.89h-1.89zM60.54 54.86h1.89v1.89h-1.89zM60.54 56.76h1.89v1.89h-1.89zM60.54 60.54h1.89v1.89h-1.89zM60.54 62.43h1.89v1.89h-1.89zM62.43 18.92h1.89v1.89h-1.89zM62.43 22.70h1.89v1.89h-1.89zM62.43 24.59h1.89v1.89h-1.89zM62.43 26.49h1.89v1.89h-1.89zM62.43 28.38h1.89v1.89h-1.89zM62.43 30.27h1.89v1.89h-1.89zM62.43 32.16h1.89v1.89h-1.89zM62.43 35.95h1.89v1.89h-1.89zM62.43 37.84h1.89v1.89h-1.89zM62.43 39.73h1.89v1.89h-1.89zM62.43 41.62h1.89v1.89h-1.89zM62.43 43.51h1.89v1.89h-1.89zM62.43 45.41h1.89v1.89h-1.89zM62.43 54.86h1.89v1.89h-1.89zM62.43 58.65h1.89v1.89h-1.89zM62.43 66.22h1.89v1.89h-1.89zM64.32 15.14h1.89v1.89h-1.89zM64.32 17.03h1.89v1.89h-1.89zM64.32 20.81h1.89v1.89h-1.89zM64.32 22.70h1.89v1.89h-1.89zM64.32 24.59h1.89v1.89h-1.89zM64.32 26.49h1.89v1.89h-1.89zM64.32 28.38h1.89v1.89h-1.89zM64.32 34.05h1.89v1.89h-1.89zM64.32 35.95h1.89v1.89h-1.89zM64.32 39.73h1.89v1.89h-1.89zM64.32 41.62h1.89v1.89h-1.89zM64.32 45.41h1.89v1.89h-1.89zM64.32 47.30h1.89v1.89h-1.89zM64.32 52.97h1.89v1.89h-1.89zM64.32 54.86h1.89v1.89h-1.89zM64.32 56.76h1.89v1.89h-1.89zM64.32 62.43h1.89v1.89h-1.89zM64.32 66.22h1.89v1.89h-1.89zM64.32 68.11h1.89v1.89h-1.89zM66.22 15.14h1.89v1.89h-1.89zM66.22 20.81h1.89v1.89h-1.89zM66.22 24.59h1.89v1.89h-1.89zM66.22 28.38h1.89v1.89h-1.89zM66.22 30.27h1.89v1.89h-1.89zM66.22 34.05h1.89v1.89h-1.89zM66.22 41.62h1.89v1.89h-1.89zM66.22 47.30h1.89v1.89h-1.89zM66.22 49.19h1.89v1.89h-1.89zM66.22 51.08h1.89v1.89h-1.89zM66.22 52.97h1.89v1.89h-1.89zM66.22 56.76h1.89v1.89h-1.89zM66.22 58.65h1.89v1.89h-1.89zM66.22 60.54h1.89v1.89h-1.89zM66.22 66.22h1.89v1.89h-1.89zM68.11 18.92h1.89v1.89h-1.89zM68.11 20.81h1.89v1.89h-1.89zM68.11 26.49h1.89v1.89h-1.89zM68.11 30.27h1.89v1.89h-1.89zM68.11 34.05h1.89v1.89h-1.89zM68.11 35.95h1.89v1.89h-1.89zM68.11 37.84h1.89v1.89h-1.89zM68.11 39.73h1.89v1.89h-1.89zM68.11 43.51h1.89v1.89h-1.89zM68.11 45.41h1.89v1.89h-1.89zM68.11 49.19h1.89v1.89h-1.89zM68.11 51.08h1.89v1.89h-1.89zM68.11 54.86h1.89v1.89h-1.89zM68.11 56.76h1.89v1.89h-1.89zM68.11 58.65h1.89v1.89h-1.89zM68.11 60.54h1.89v1.89h-1.89zM68.11 66.22h1.89v1.89h-1.89zM68.11 68.11h1.89v1.89h-1.89z" fill="#2a2a2a"/><circle cx="35.00" cy="35.00" r="9.80" fill="#f4f4f4"/><path d="M29.00 36.00 q3 -6 6 0 q3 6 6 0" fill="none" stroke="#2a8ee0" stroke-width="2.4" stroke-linecap="round"/><circle cx="41.00" cy="31.00" r="1.2" fill="#2a8ee0"/></svg><svg class="abs" style="left:1324px;top:875px" width="71" height="71" viewBox="0 0 71 71"><rect x="0.96" y="0.96" width="11.51" height="11.51" fill="none" stroke="#5a5a5a" stroke-width="1.92"/><rect x="3.84" y="3.84" width="5.76" height="5.76" fill="#5a5a5a"/><rect x="58.53" y="0.96" width="11.51" height="11.51" fill="none" stroke="#5a5a5a" stroke-width="1.92"/><rect x="61.41" y="3.84" width="5.76" height="5.76" fill="#5a5a5a"/><rect x="0.96" y="58.53" width="11.51" height="11.51" fill="none" stroke="#5a5a5a" stroke-width="1.92"/><rect x="3.84" y="61.41" width="5.76" height="5.76" fill="#5a5a5a"/><rect x="52.77" y="52.77" width="7.68" height="7.68" fill="none" stroke="#5a5a5a" stroke-width="1.92"/><rect x="55.65" y="55.65" width="1.92" height="1.92" fill="#5a5a5a"/><path d="M0.29 27.15h1.34v1.34h-1.34zM0.29 29.07h1.34v1.34h-1.34zM0.29 36.75h1.34v1.34h-1.34zM0.29 38.67h1.34v1.34h-1.34zM0.29 40.59h1.34v1.34h-1.34zM0.29 46.34h1.34v1.34h-1.34zM0.29 48.26h1.34v1.34h-1.34zM0.29 50.18h1.34v1.34h-1.34zM2.21 15.64h1.34v1.34h-1.34zM2.21 19.48h1.34v1.34h-1.34zM2.21 23.31h1.34v1.34h-1.34zM2.21 25.23h1.34v1.34h-1.34zM2.21 29.07h1.34v1.34h-1.34zM2.21 30.99h1.34v1.34h-1.34zM2.21 36.75h1.34v1.34h-1.34zM2.21 44.42h1.34v1.34h-1.34zM2.21 54.02h1.34v1.34h-1.34zM4.13 15.64h1.34v1.34h-1.34zM4.13 17.56h1.34v1.34h-1.34zM4.13 19.48h1.34v1.34h-1.34zM4.13 21.40h1.34v1.34h-1.34zM4.13 23.31h1.34v1.34h-1.34zM4.13 27.15h1.34v1.34h-1.34zM4.13 30.99h1.34v1.34h-1.34zM4.13 32.91h1.34v1.34h-1.34zM4.13 36.75h1.34v1.34h-1.34zM4.13 38.67h1.34v1.34h-1.34zM4.13 40.59h1.34v1.34h-1.34zM4.13 44.42h1.34v1.34h-1.34zM4.13 48.26h1.34v1.34h-1.34zM4.13 54.02h1.34v1.34h-1.34zM6.04 17.56h1.34v1.34h-1.34zM6.04 21.40h1.34v1.34h-1.34zM6.04 23.31h1.34v1.34h-1.34zM6.04 25.23h1.34v1.34h-1.34zM6.04 29.07h1.34v1.34h-1.34zM6.04 36.75h1.34v1.34h-1.34zM6.04 38.67h1.34v1.34h-1.34zM6.04 44.42h1.34v1.34h-1.34zM6.04 52.10h1.34v1.34h-1.34zM7.96 15.64h1.34v1.34h-1.34zM7.96 17.56h1.34v1.34h-1.34zM7.96 23.31h1.34v1.34h-1.34zM7.96 29.07h1.34v1.34h-1.34zM7.96 30.99h1.34v1.34h-1.34zM7.96 32.91h1.34v1.34h-1.34zM7.96 34.83h1.34v1.34h-1.34zM7.96 36.75h1.34v1.34h-1.34zM7.96 42.50h1.34v1.34h-1.34zM7.96 44.42h1.34v1.34h-1.34zM7.96 50.18h1.34v1.34h-1.34zM7.96 52.10h1.34v1.34h-1.34zM9.88 17.56h1.34v1.34h-1.34zM9.88 19.48h1.34v1.34h-1.34zM9.88 21.40h1.34v1.34h-1.34zM9.88 25.23h1.34v1.34h-1.34zM9.88 27.15h1.34v1.34h-1.34zM9.88 30.99h1.34v1.34h-1.34zM9.88 40.59h1.34v1.34h-1.34zM9.88 42.50h1.34v1.34h-1.34zM9.88 44.42h1.34v1.34h-1.34zM9.88 48.26h1.34v1.34h-1.34zM9.88 50.18h1.34v1.34h-1.34zM11.80 15.64h1.34v1.34h-1.34zM11.80 19.48h1.34v1.34h-1.34zM11.80 23.31h1.34v1.34h-1.34zM11.80 27.15h1.34v1.34h-1.34zM11.80 30.99h1.34v1.34h-1.34zM11.80 34.83h1.34v1.34h-1.34zM11.80 38.67h1.34v1.34h-1.34zM11.80 42.50h1.34v1.34h-1.34zM11.80 46.34h1.34v1.34h-1.34zM11.80 50.18h1.34v1.34h-1.34zM11.80 54.02h1.34v1.34h-1.34zM13.72 17.56h1.34v1.34h-1.34zM13.72 19.48h1.34v1.34h-1.34zM13.72 23.31h1.34v1.34h-1.34zM13.72 25.23h1.34v1.34h-1.34zM13.72 27.15h1.34v1.34h-1.34zM13.72 29.07h1.34v1.34h-1.34zM13.72 30.99h1.34v1.34h-1.34zM13.72 38.67h1.34v1.34h-1.34zM13.72 40.59h1.34v1.34h-1.34zM13.72 42.50h1.34v1.34h-1.34zM13.72 44.42h1.34v1.34h-1.34zM13.72 50.18h1.34v1.34h-1.34zM15.64 6.04h1.34v1.34h-1.34zM15.64 9.88h1.34v1.34h-1.34zM15.64 11.80h1.34v1.34h-1.34zM15.64 13.72h1.34v1.34h-1.34zM15.64 19.48h1.34v1.34h-1.34zM15.64 27.15h1.34v1.34h-1.34zM15.64 30.99h1.34v1.34h-1.34zM15.64 34.83h1.34v1.34h-1.34zM15.64 42.50h1.34v1.34h-1.34zM15.64 50.18h1.34v1.34h-1.34zM15.64 65.53h1.34v1.34h-1.34zM17.56 0.29h1.34v1.34h-1.34zM17.56 7.96h1.34v1.34h-1.34zM17.56 17.56h1.34v1.34h-1.34zM17.56 27.15h1.34v1.34h-1.34zM17.56 29.07h1.34v1.34h-1.34zM17.56 30.99h1.34v1.34h-1.34zM17.56 34.83h1.34v1.34h-1.34zM17.56 40.59h1.34v1.34h-1.34zM17.56 42.50h1.34v1.34h-1.34zM17.56 44.42h1.34v1.34h-1.34zM17.56 46.34h1.34v1.34h-1.34zM17.56 48.26h1.34v1.34h-1.34zM17.56 50.18h1.34v1.34h-1.34zM17.56 52.10h1.34v1.34h-1.34zM17.56 54.02h1.34v1.34h-1.34zM17.56 55.94h1.34v1.34h-1.34zM17.56 57.86h1.34v1.34h-1.34zM17.56 59.77h1.34v1.34h-1.34zM17.56 65.53h1.34v1.34h-1.34zM17.56 69.37h1.34v1.34h-1.34zM19.48 0.29h1.34v1.34h-1.34zM19.48 2.21h1.34v1.34h-1.34zM19.48 4.13h1.34v1.34h-1.34zM19.48 6.04h1.34v1.34h-1.34zM19.48 9.88h1.34v1.34h-1.34zM19.48 11.80h1.34v1.34h-1.34zM19.48 13.72h1.34v1.34h-1.34zM19.48 17.56h1.34v1.34h-1.34zM19.48 21.40h1.34v1.34h-1.34zM19.48 29.07h1.34v1.34h-1.34zM19.48 34.83h1.34v1.34h-1.34zM19.48 36.75h1.34v1.34h-1.34zM19.48 48.26h1.34v1.34h-1.34zM19.48 52.10h1.34v1.34h-1.34zM19.48 54.02h1.34v1.34h-1.34zM19.48 59.77h1.34v1.34h-1.34zM19.48 65.53h1.34v1.34h-1.34zM19.48 67.45h1.34v1.34h-1.34zM19.48 69.37h1.34v1.34h-1.34zM21.40 0.29h1.34v1.34h-1.34zM21.40 4.13h1.34v1.34h-1.34zM21.40 13.72h1.34v1.34h-1.34zM21.40 17.56h1.34v1.34h-1.34zM21.40 19.48h1.34v1.34h-1.34zM21.40 21.40h1.34v1.34h-1.34zM21.40 25.23h1.34v1.34h-1.34zM21.40 27.15h1.34v1.34h-1.34zM21.40 29.07h1.34v1.34h-1.34zM21.40 30.99h1.34v1.34h-1.34zM21.40 34.83h1.34v1.34h-1.34zM21.40 36.75h1.34v1.34h-1.34zM21.40 42.50h1.34v1.34h-1.34zM21.40 46.34h1.34v1.34h-1.34zM21.40 52.10h1.34v1.34h-1.34zM21.40 54.02h1.34v1.34h-1.34zM21.40 55.94h1.34v1.34h-1.34zM21.40 59.77h1.34v1.34h-1.34zM21.40 63.61h1.34v1.34h-1.34zM23.31 0.29h1.34v1.34h-1.34zM23.31 4.13h1.34v1.34h-1.34zM23.31 7.96h1.34v1.34h-1.34zM23.31 9.88h1.34v1.34h-1.34zM23.31 11.80h1.34v1.34h-1.34zM23.31 15.64h1.34v1.34h-1.34zM23.31 17.56h1.34v1.34h-1.34zM23.31 23.31h1.34v1.34h-1.34zM23.31 25.23h1.34v1.34h-1.34zM23.31 27.15h1.34v1.34h-1.34zM23.31 34.83h1.34v1.34h-1.34zM23.31 38.67h1.34v1.34h-1.34zM23.31 46.34h1.34v1.34h-1.34zM23.31 50.18h1.34v1.34h-1.34zM23.31 52.10h1.34v1.34h-1.34zM23.31 55.94h1.34v1.34h-1.34zM23.31 57.86h1.34v1.34h-1.34zM23.31 61.69h1.34v1.34h-1.34zM23.31 67.45h1.34v1.34h-1.34zM23.31 69.37h1.34v1.34h-1.34zM25.23 4.13h1.34v1.34h-1.34zM25.23 6.04h1.34v1.34h-1.34zM25.23 9.88h1.34v1.34h-1.34zM25.23 13.72h1.34v1.34h-1.34zM25.23 15.64h1.34v1.34h-1.34zM25.23 21.40h1.34v1.34h-1.34zM25.23 23.31h1.34v1.34h-1.34zM25.23 30.99h1.34v1.34h-1.34zM25.23 40.59h1.34v1.34h-1.34zM25.23 44.42h1.34v1.34h-1.34zM25.23 52.10h1.34v1.34h-1.34zM25.23 54.02h1.34v1.34h-1.34zM25.23 57.86h1.34v1.34h-1.34zM25.23 61.69h1.34v1.34h-1.34zM25.23 63.61h1.34v1.34h-1.34zM25.23 67.45h1.34v1.34h-1.34zM25.23 69.37h1.34v1.34h-1.34zM27.15 0.29h1.34v1.34h-1.34zM27.15 2.21h1.34v1.34h-1.34zM27.15 4.13h1.34v1.34h-1.34zM27.15 11.80h1.34v1.34h-1.34zM27.15 13.72h1.34v1.34h-1.34zM27.15 15.64h1.34v1.34h-1.34zM27.15 17.56h1.34v1.34h-1.34zM27.15 21.40h1.34v1.34h-1.34zM27.15 25.23h1.34v1.34h-1.34zM27.15 27.15h1.34v1.34h-1.34zM27.15 30.99h1.34v1.34h-1.34zM27.15 42.50h1.34v1.34h-1.34zM27.15 46.34h1.34v1.34h-1.34zM27.15 52.10h1.34v1.34h-1.34zM27.15 54.02h1.34v1.34h-1.34zM27.15 55.94h1.34v1.34h-1.34zM27.15 59.77h1.34v1.34h-1.34zM27.15 65.53h1.34v1.34h-1.34zM27.15 69.37h1.34v1.34h-1.34zM29.07 0.29h1.34v1.34h-1.34zM29.07 4.13h1.34v1.34h-1.34zM29.07 7.96h1.34v1.34h-1.34zM29.07 9.88h1.34v1.34h-1.34zM29.07 15.64h1.34v1.34h-1.34zM29.07 19.48h1.34v1.34h-1.34zM29.07 21.40h1.34v1.34h-1.34zM29.07 27.15h1.34v1.34h-1.34zM29.07 29.07h1.34v1.34h-1.34zM29.07 36.75h1.34v1.34h-1.34zM29.07 40.59h1.34v1.34h-1.34zM29.07 42.50h1.34v1.34h-1.34zM29.07 44.42h1.34v1.34h-1.34zM29.07 48.26h1.34v1.34h-1.34zM29.07 50.18h1.34v1.34h-1.34zM29.07 52.10h1.34v1.34h-1.34zM29.07 59.77h1.34v1.34h-1.34zM30.99 0.29h1.34v1.34h-1.34zM30.99 2.21h1.34v1.34h-1.34zM30.99 4.13h1.34v1.34h-1.34zM30.99 6.04h1.34v1.34h-1.34zM30.99 7.96h1.34v1.34h-1.34zM30.99 11.80h1.34v1.34h-1.34zM30.99 13.72h1.34v1.34h-1.34zM30.99 17.56h1.34v1.34h-1.34zM30.99 19.48h1.34v1.34h-1.34zM30.99 25.23h1.34v1.34h-1.34zM30.99 27.15h1.34v1.34h-1.34zM30.99 29.07h1.34v1.34h-1.34zM30.99 30.99h1.34v1.34h-1.34zM30.99 32.91h1.34v1.34h-1.34zM30.99 34.83h1.34v1.34h-1.34zM30.99 36.75h1.34v1.34h-1.34zM30.99 40.59h1.34v1.34h-1.34zM30.99 42.50h1.34v1.34h-1.34zM30.99 44.42h1.34v1.34h-1.34zM30.99 46.34h1.34v1.34h-1.34zM30.99 48.26h1.34v1.34h-1.34zM30.99 50.18h1.34v1.34h-1.34zM30.99 52.10h1.34v1.34h-1.34zM30.99 54.02h1.34v1.34h-1.34zM30.99 57.86h1.34v1.34h-1.34zM30.99 65.53h1.34v1.34h-1.34zM30.99 69.37h1.34v1.34h-1.34zM32.91 2.21h1.34v1.34h-1.34zM32.91 7.96h1.34v1.34h-1.34zM32.91 9.88h1.34v1.34h-1.34zM32.91 13.72h1.34v1.34h-1.34zM32.91 15.64h1.34v1.34h-1.34zM32.91 17.56h1.34v1.34h-1.34zM32.91 19.48h1.34v1.34h-1.34zM32.91 23.31h1.34v1.34h-1.34zM32.91 25.23h1.34v1.34h-1.34zM32.91 27.15h1.34v1.34h-1.34zM32.91 29.07h1.34v1.34h-1.34zM32.91 34.83h1.34v1.34h-1.34zM32.91 36.75h1.34v1.34h-1.34zM32.91 44.42h1.34v1.34h-1.34zM32.91 48.26h1.34v1.34h-1.34zM32.91 50.18h1.34v1.34h-1.34zM32.91 54.02h1.34v1.34h-1.34zM32.91 55.94h1.34v1.34h-1.34zM32.91 63.61h1.34v1.34h-1.34zM32.91 65.53h1.34v1.34h-1.34zM32.91 67.45h1.34v1.34h-1.34zM34.83 0.29h1.34v1.34h-1.34zM34.83 4.13h1.34v1.34h-1.34zM34.83 6.04h1.34v1.34h-1.34zM34.83 7.96h1.34v1.34h-1.34zM34.83 9.88h1.34v1.34h-1.34zM34.83 11.80h1.34v1.34h-1.34zM34.83 13.72h1.34v1.34h-1.34zM34.83 15.64h1.34v1.34h-1.34zM34.83 17.56h1.34v1.34h-1.34zM34.83 19.48h1.34v1.34h-1.34zM34.83 21.40h1.34v1.34h-1.34zM34.83 23.31h1.34v1.34h-1.34zM34.83 27.15h1.34v1.34h-1.34zM34.83 30.99h1.34v1.34h-1.34zM34.83 34.83h1.34v1.34h-1.34zM34.83 36.75h1.34v1.34h-1.34zM34.83 38.67h1.34v1.34h-1.34zM34.83 48.26h1.34v1.34h-1.34zM34.83 50.18h1.34v1.34h-1.34zM34.83 54.02h1.34v1.34h-1.34zM34.83 57.86h1.34v1.34h-1.34zM34.83 65.53h1.34v1.34h-1.34zM34.83 67.45h1.34v1.34h-1.34zM36.75 0.29h1.34v1.34h-1.34zM36.75 2.21h1.34v1.34h-1.34zM36.75 4.13h1.34v1.34h-1.34zM36.75 6.04h1.34v1.34h-1.34zM36.75 13.72h1.34v1.34h-1.34zM36.75 15.64h1.34v1.34h-1.34zM36.75 17.56h1.34v1.34h-1.34zM36.75 19.48h1.34v1.34h-1.34zM36.75 21.40h1.34v1.34h-1.34zM36.75 23.31h1.34v1.34h-1.34zM36.75 27.15h1.34v1.34h-1.34zM36.75 29.07h1.34v1.34h-1.34zM36.75 32.91h1.34v1.34h-1.34zM36.75 34.83h1.34v1.34h-1.34zM36.75 36.75h1.34v1.34h-1.34zM36.75 38.67h1.34v1.34h-1.34zM36.75 40.59h1.34v1.34h-1.34zM36.75 42.50h1.34v1.34h-1.34zM36.75 44.42h1.34v1.34h-1.34zM36.75 57.86h1.34v1.34h-1.34zM36.75 69.37h1.34v1.34h-1.34zM38.67 2.21h1.34v1.34h-1.34zM38.67 4.13h1.34v1.34h-1.34zM38.67 6.04h1.34v1.34h-1.34zM38.67 7.96h1.34v1.34h-1.34zM38.67 9.88h1.34v1.34h-1.34zM38.67 11.80h1.34v1.34h-1.34zM38.67 15.64h1.34v1.34h-1.34zM38.67 17.56h1.34v1.34h-1.34zM38.67 23.31h1.34v1.34h-1.34zM38.67 25.23h1.34v1.34h-1.34zM38.67 27.15h1.34v1.34h-1.34zM38.67 29.07h1.34v1.34h-1.34zM38.67 36.75h1.34v1.34h-1.34zM38.67 38.67h1.34v1.34h-1.34zM38.67 40.59h1.34v1.34h-1.34zM38.67 42.50h1.34v1.34h-1.34zM38.67 44.42h1.34v1.34h-1.34zM38.67 52.10h1.34v1.34h-1.34zM38.67 55.94h1.34v1.34h-1.34zM38.67 59.77h1.34v1.34h-1.34zM38.67 65.53h1.34v1.34h-1.34zM38.67 67.45h1.34v1.34h-1.34zM40.59 0.29h1.34v1.34h-1.34zM40.59 2.21h1.34v1.34h-1.34zM40.59 4.13h1.34v1.34h-1.34zM40.59 17.56h1.34v1.34h-1.34zM40.59 21.40h1.34v1.34h-1.34zM40.59 23.31h1.34v1.34h-1.34zM40.59 27.15h1.34v1.34h-1.34zM40.59 30.99h1.34v1.34h-1.34zM40.59 34.83h1.34v1.34h-1.34zM40.59 36.75h1.34v1.34h-1.34zM40.59 38.67h1.34v1.34h-1.34zM40.59 40.59h1.34v1.34h-1.34zM40.59 44.42h1.34v1.34h-1.34zM40.59 48.26h1.34v1.34h-1.34zM40.59 50.18h1.34v1.34h-1.34zM40.59 52.10h1.34v1.34h-1.34zM40.59 61.69h1.34v1.34h-1.34zM40.59 63.61h1.34v1.34h-1.34zM40.59 67.45h1.34v1.34h-1.34zM40.59 69.37h1.34v1.34h-1.34zM42.50 0.29h1.34v1.34h-1.34zM42.50 2.21h1.34v1.34h-1.34zM42.50 7.96h1.34v1.34h-1.34zM42.50 11.80h1.34v1.34h-1.34zM42.50 13.72h1.34v1.34h-1.34zM42.50 23.31h1.34v1.34h-1.34zM42.50 25.23h1.34v1.34h-1.34zM42.50 30.99h1.34v1.34h-1.34zM42.50 32.91h1.34v1.34h-1.34zM42.50 34.83h1.34v1.34h-1.34zM42.50 36.75h1.34v1.34h-1.34zM42.50 38.67h1.34v1.34h-1.34zM42.50 40.59h1.34v1.34h-1.34zM42.50 42.50h1.34v1.34h-1.34zM42.50 46.34h1.34v1.34h-1.34zM42.50 61.69h1.34v1.34h-1.34zM42.50 69.37h1.34v1.34h-1.34zM44.42 0.29h1.34v1.34h-1.34zM44.42 2.21h1.34v1.34h-1.34zM44.42 4.13h1.34v1.34h-1.34zM44.42 13.72h1.34v1.34h-1.34zM44.42 17.56h1.34v1.34h-1.34zM44.42 21.40h1.34v1.34h-1.34zM44.42 38.67h1.34v1.34h-1.34zM44.42 44.42h1.34v1.34h-1.34zM44.42 50.18h1.34v1.34h-1.34zM44.42 52.10h1.34v1.34h-1.34zM44.42 54.02h1.34v1.34h-1.34zM44.42 55.94h1.34v1.34h-1.34zM44.42 65.53h1.34v1.34h-1.34zM44.42 67.45h1.34v1.34h-1.34zM46.34 4.13h1.34v1.34h-1.34zM46.34 7.96h1.34v1.34h-1.34zM46.34 9.88h1.34v1.34h-1.34zM46.34 11.80h1.34v1.34h-1.34zM46.34 13.72h1.34v1.34h-1.34zM46.34 19.48h1.34v1.34h-1.34zM46.34 25.23h1.34v1.34h-1.34zM46.34 27.15h1.34v1.34h-1.34zM46.34 36.75h1.34v1.34h-1.34zM46.34 38.67h1.34v1.34h-1.34zM46.34 44.42h1.34v1.34h-1.34zM46.34 46.34h1.34v1.34h-1.34zM46.34 52.10h1.34v1.34h-1.34zM46.34 54.02h1.34v1.34h-1.34zM46.34 55.94h1.34v1.34h-1.34zM46.34 61.69h1.34v1.34h-1.34zM46.34 63.61h1.34v1.34h-1.34zM48.26 2.21h1.34v1.34h-1.34zM48.26 4.13h1.34v1.34h-1.34zM48.26 9.88h1.34v1.34h-1.34zM48.26 19.48h1.34v1.34h-1.34zM48.26 25.23h1.34v1.34h-1.34zM48.26 27.15h1.34v1.34h-1.34zM48.26 29.07h1.34v1.34h-1.34zM48.26 30.99h1.34v1.34h-1.34zM48.26 32.91h1.34v1.34h-1.34zM48.26 34.83h1.34v1.34h-1.34zM48.26 38.67h1.34v1.34h-1.34zM48.26 57.86h1.34v1.34h-1.34zM48.26 59.77h1.34v1.34h-1.34zM48.26 61.69h1.34v1.34h-1.34zM48.26 63.61h1.34v1.34h-1.34zM48.26 65.53h1.34v1.34h-1.34zM48.26 67.45h1.34v1.34h-1.34zM50.18 2.21h1.34v1.34h-1.34zM50.18 4.13h1.34v1.34h-1.34zM50.18 7.96h1.34v1.34h-1.34zM50.18 9.88h1.34v1.34h-1.34zM50.18 11.80h1.34v1.34h-1.34zM50.18 15.64h1.34v1.34h-1.34zM50.18 19.48h1.34v1.34h-1.34zM50.18 25.23h1.34v1.34h-1.34zM50.18 30.99h1.34v1.34h-1.34zM50.18 32.91h1.34v1.34h-1.34zM50.18 34.83h1.34v1.34h-1.34zM50.18 36.75h1.34v1.34h-1.34zM50.18 42.50h1.34v1.34h-1.34zM50.18 44.42h1.34v1.34h-1.34zM50.18 46.34h1.34v1.34h-1.34zM50.18 54.02h1.34v1.34h-1.34zM50.18 55.94h1.34v1.34h-1.34zM50.18 61.69h1.34v1.34h-1.34zM50.18 63.61h1.34v1.34h-1.34zM50.18 65.53h1.34v1.34h-1.34zM50.18 69.37h1.34v1.34h-1.34zM52.10 0.29h1.34v1.34h-1.34zM52.10 2.21h1.34v1.34h-1.34zM52.10 4.13h1.34v1.34h-1.34zM52.10 9.88h1.34v1.34h-1.34zM52.10 15.64h1.34v1.34h-1.34zM52.10 17.56h1.34v1.34h-1.34zM52.10 21.40h1.34v1.34h-1.34zM52.10 25.23h1.34v1.34h-1.34zM52.10 27.15h1.34v1.34h-1.34zM52.10 29.07h1.34v1.34h-1.34zM52.10 30.99h1.34v1.34h-1.34zM52.10 32.91h1.34v1.34h-1.34zM52.10 36.75h1.34v1.34h-1.34zM52.10 38.67h1.34v1.34h-1.34zM52.10 42.50h1.34v1.34h-1.34zM52.10 44.42h1.34v1.34h-1.34zM52.10 46.34h1.34v1.34h-1.34zM52.10 48.26h1.34v1.34h-1.34zM52.10 65.53h1.34v1.34h-1.34zM52.10 67.45h1.34v1.34h-1.34zM54.02 0.29h1.34v1.34h-1.34zM54.02 9.88h1.34v1.34h-1.34zM54.02 11.80h1.34v1.34h-1.34zM54.02 13.72h1.34v1.34h-1.34zM54.02 17.56h1.34v1.34h-1.34zM54.02 25.23h1.34v1.34h-1.34zM54.02 32.91h1.34v1.34h-1.34zM54.02 36.75h1.34v1.34h-1.34zM54.02 42.50h1.34v1.34h-1.34zM54.02 44.42h1.34v1.34h-1.34zM54.02 46.34h1.34v1.34h-1.34zM54.02 48.26h1.34v1.34h-1.34zM54.02 50.18h1.34v1.34h-1.34zM54.02 63.61h1.34v1.34h-1.34zM54.02 65.53h1.34v1.34h-1.34zM54.02 67.45h1.34v1.34h-1.34zM54.02 69.37h1.34v1.34h-1.34zM55.94 15.64h1.34v1.34h-1.34zM55.94 21.40h1.34v1.34h-1.34zM55.94 23.31h1.34v1.34h-1.34zM55.94 30.99h1.34v1.34h-1.34zM55.94 32.91h1.34v1.34h-1.34zM55.94 38.67h1.34v1.34h-1.34zM55.94 40.59h1.34v1.34h-1.34zM55.94 42.50h1.34v1.34h-1.34zM55.94 44.42h1.34v1.34h-1.34zM55.94 48.26h1.34v1.34h-1.34zM55.94 61.69h1.34v1.34h-1.34zM55.94 69.37h1.34v1.34h-1.34zM57.86 15.64h1.34v1.34h-1.34zM57.86 19.48h1.34v1.34h-1.34zM57.86 21.40h1.34v1.34h-1.34zM57.86 23.31h1.34v1.34h-1.34zM57.86 29.07h1.34v1.34h-1.34zM57.86 32.91h1.34v1.34h-1.34zM57.86 38.67h1.34v1.34h-1.34zM57.86 40.59h1.34v1.34h-1.34zM57.86 44.42h1.34v1.34h-1.34zM57.86 48.26h1.34v1.34h-1.34zM57.86 65.53h1.34v1.34h-1.34zM57.86 69.37h1.34v1.34h-1.34zM59.77 15.64h1.34v1.34h-1.34zM59.77 17.56h1.34v1.34h-1.34zM59.77 19.48h1.34v1.34h-1.34zM59.77 21.40h1.34v1.34h-1.34zM59.77 23.31h1.34v1.34h-1.34zM59.77 29.07h1.34v1.34h-1.34zM59.77 40.59h1.34v1.34h-1.34zM59.77 42.50h1.34v1.34h-1.34zM59.77 46.34h1.34v1.34h-1.34zM59.77 48.26h1.34v1.34h-1.34zM59.77 63.61h1.34v1.34h-1.34zM59.77 67.45h1.34v1.34h-1.34zM61.69 17.56h1.34v1.34h-1.34zM61.69 19.48h1.34v1.34h-1.34zM61.69 21.40h1.34v1.34h-1.34zM61.69 25.23h1.34v1.34h-1.34zM61.69 27.15h1.34v1.34h-1.34zM61.69 29.07h1.34v1.34h-1.34zM61.69 30.99h1.34v1.34h-1.34zM61.69 32.91h1.34v1.34h-1.34zM61.69 34.83h1.34v1.34h-1.34zM61.69 38.67h1.34v1.34h-1.34zM61.69 40.59h1.34v1.34h-1.34zM61.69 46.34h1.34v1.34h-1.34zM61.69 52.10h1.34v1.34h-1.34zM61.69 55.94h1.34v1.34h-1.34zM61.69 57.86h1.34v1.34h-1.34zM61.69 61.69h1.34v1.34h-1.34zM61.69 65.53h1.34v1.34h-1.34zM61.69 67.45h1.34v1.34h-1.34zM61.69 69.37h1.34v1.34h-1.34zM63.61 19.48h1.34v1.34h-1.34zM63.61 21.40h1.34v1.34h-1.34zM63.61 25.23h1.34v1.34h-1.34zM63.61 29.07h1.34v1.34h-1.34zM63.61 32.91h1.34v1.34h-1.34zM63.61 40.59h1.34v1.34h-1.34zM63.61 44.42h1.34v1.34h-1.34zM63.61 46.34h1.34v1.34h-1.34zM63.61 50.18h1.34v1.34h-1.34zM63.61 52.10h1.34v1.34h-1.34zM63.61 54.02h1.34v1.34h-1.34zM63.61 61.69h1.34v1.34h-1.34zM63.61 67.45h1.34v1.34h-1.34zM65.53 15.64h1.34v1.34h-1.34zM65.53 17.56h1.34v1.34h-1.34zM65.53 19.48h1.34v1.34h-1.34zM65.53 27.15h1.34v1.34h-1.34zM65.53 29.07h1.34v1.34h-1.34zM65.53 30.99h1.34v1.34h-1.34zM65.53 32.91h1.34v1.34h-1.34zM65.53 36.75h1.34v1.34h-1.34zM65.53 38.67h1.34v1.34h-1.34zM65.53 40.59h1.34v1.34h-1.34zM65.53 42.50h1.34v1.34h-1.34zM65.53 44.42h1.34v1.34h-1.34zM65.53 50.18h1.34v1.34h-1.34zM65.53 52.10h1.34v1.34h-1.34zM65.53 54.02h1.34v1.34h-1.34zM65.53 57.86h1.34v1.34h-1.34zM65.53 63.61h1.34v1.34h-1.34zM65.53 65.53h1.34v1.34h-1.34zM65.53 67.45h1.34v1.34h-1.34zM67.45 21.40h1.34v1.34h-1.34zM67.45 27.15h1.34v1.34h-1.34zM67.45 29.07h1.34v1.34h-1.34zM67.45 30.99h1.34v1.34h-1.34zM67.45 32.91h1.34v1.34h-1.34zM67.45 36.75h1.34v1.34h-1.34zM67.45 44.42h1.34v1.34h-1.34zM67.45 48.26h1.34v1.34h-1.34zM67.45 50.18h1.34v1.34h-1.34zM67.45 57.86h1.34v1.34h-1.34zM67.45 61.69h1.34v1.34h-1.34zM67.45 67.45h1.34v1.34h-1.34zM67.45 69.37h1.34v1.34h-1.34zM69.37 15.64h1.34v1.34h-1.34zM69.37 17.56h1.34v1.34h-1.34zM69.37 19.48h1.34v1.34h-1.34zM69.37 23.31h1.34v1.34h-1.34zM69.37 27.15h1.34v1.34h-1.34zM69.37 29.07h1.34v1.34h-1.34zM69.37 30.99h1.34v1.34h-1.34zM69.37 40.59h1.34v1.34h-1.34zM69.37 42.50h1.34v1.34h-1.34zM69.37 44.42h1.34v1.34h-1.34zM69.37 46.34h1.34v1.34h-1.34zM69.37 50.18h1.34v1.34h-1.34zM69.37 52.10h1.34v1.34h-1.34zM69.37 59.77h1.34v1.34h-1.34zM69.37 61.69h1.34v1.34h-1.34zM69.37 65.53h1.34v1.34h-1.34zM69.37 69.37h1.34v1.34h-1.34z" fill="#707070"/><rect x="27.05" y="27.05" width="16.91" height="16.91" fill="#fff"/><rect x="28.05" y="28.05" width="14.91" height="14.91" fill="#2f9ad8"/><path d="M31.50 34.00 q2 -3 4 0 q2 3 4 0" fill="none" stroke="#fff" stroke-width="1.2"/><rect x="31.00" y="37.00" width="9" height="1.5" fill="#cfe6f7"/></svg><svg class="abs" style="left:817px;top:937px" width="14" height="14" viewBox="0 0 14 14"><circle cx="7" cy="7" r="6.2" fill="#e9c15a"/><circle cx="7" cy="7.3" r="4.6" fill="#d9573a"/><circle cx="7" cy="6.5" r="1.8" fill="#f2d36b"/></svg><div class="t" style="left:841px;top:937.5px;font-size:13px;line-height:18px;color:#3845e8;text-decoration:underline">粤ICP备19147158号</div><div class="t" style="left:973px;top:937.5px;font-size:13.5px;line-height:18px;color:#666">© 2019-2024 智能公元 版权所有</div><div class="abs" style="left:1832px;top:681px;width:44px;height:44px;border-radius:50%;background:#fff;box-shadow:0 8px 26px rgba(30,40,70,.15);z-index:6"></div><div class="abs" style="left:1832px;top:741px;width:44px;height:44px;border-radius:50%;background:#fff;box-shadow:0 8px 26px rgba(30,40,70,.15);z-index:6"></div><svg class="abs" style="left:1800px;top:660px;z-index:7" width="100" height="140" viewBox="1800 660 100 140">
<path d="M1846.6 702 A7.4 7.4 0 0 1 1861.4 702" fill="none" stroke="#2a6df5" stroke-width="1.7"/>
<rect x="1845.6" y="700.6" width="3.2" height="6.8" rx="1.6" fill="none" stroke="#2a6df5" stroke-width="1.7"/>
<rect x="1859.2" y="700.6" width="3.2" height="6.8" rx="1.6" fill="none" stroke="#2a6df5" stroke-width="1.7"/>
<path d="M1860.8 707.4 Q1860.6 710.4 1854.2 710.4" fill="none" stroke="#2a6df5" stroke-width="1.7"/>
<path d="M1846 755.8 Q1850 755 1854 756.4 Q1858 755 1862 755.8 V768.6 Q1858 768 1854 769.2 Q1850 768 1846 768.6 Z M1854 756.4 V769.2" fill="none" stroke="#2a6df5" stroke-width="1.7" stroke-linejoin="round"/>
</svg><svg class="abs" style="left:1690px;top:374px;z-index:8" width="24" height="60" viewBox="0 0 24 60"><path d="M16.5 2.2 L17.9 2.4 L17.2 41.4 L21.1 42.1 L11.4 57.2 L3.7 40.4 Q6.5 42.6 8 41.6 Z" fill="#e8473b" stroke="#e8473b" stroke-width="0.4" stroke-linejoin="round"/></svg><div class="abs" style="left:1914px;top:0;width:6px;height:945px;background:#e3e3e6"></div><div class="abs" style="left:1914px;top:159px;width:6px;height:800px;background:#c3c4c8;border-radius:3px"></div></body></html>
